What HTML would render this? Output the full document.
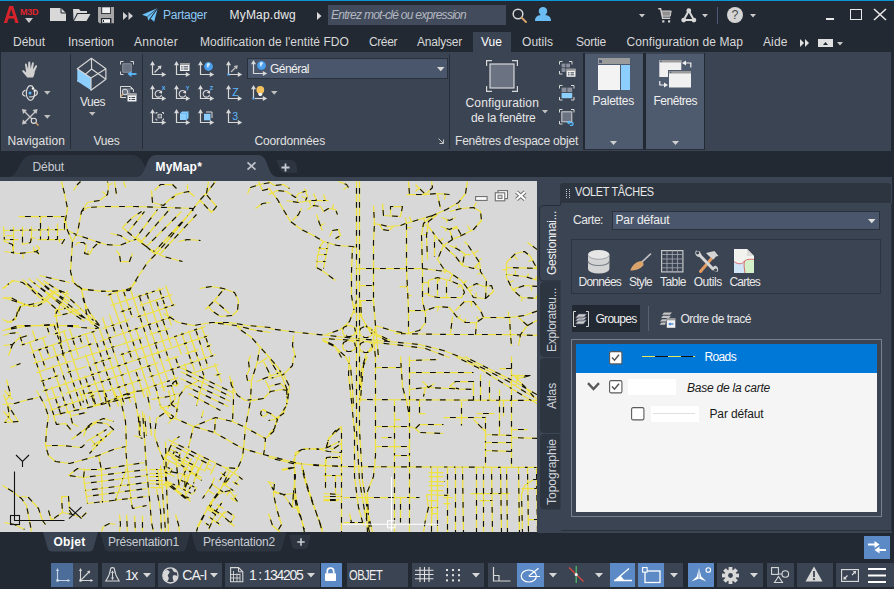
<!DOCTYPE html>
<html><head><meta charset="utf-8"><title>MyMap.dwg</title>
<style>
*{box-sizing:border-box;margin:0;padding:0}
html,body{width:894px;height:589px;overflow:hidden;background:#222933}
body{position:relative;font-family:"Liberation Sans",sans-serif;font-size:12px;color:#e4e4e4}
.a{position:absolute;white-space:nowrap}
.t{position:absolute;white-space:nowrap;line-height:16px;height:16px;font-size:12px}
.c{transform:translateX(-50%)}
svg{position:absolute;overflow:visible}
</style></head><body>

<div class="a" style="left:0px;top:0px;width:894px;height:1px;background:#0c96d8;"></div>
<div class="a" style="left:1px;top:52px;width:890px;height:99px;background:#3b4453;"></div>
<div class="a" style="left:473px;top:32px;width:38px;height:21px;background:#3b4453;"></div>
<div class="a" style="left:70px;top:54px;width:1px;height:95px;background:#262d38;"></div>
<div class="a" style="left:142px;top:54px;width:1px;height:95px;background:#262d38;"></div>
<div class="a" style="left:449px;top:54px;width:1px;height:95px;background:#262d38;"></div>
<div class="a" style="left:583px;top:53px;width:2px;height:97px;background:#222933;"></div>
<div class="a" style="left:585px;top:54px;width:58px;height:95px;background:#4e5a6e;"></div>
<div class="a" style="left:643px;top:53px;width:3px;height:97px;background:#222933;"></div>
<div class="a" style="left:646px;top:54px;width:58px;height:95px;background:#4e5a6e;"></div>
<div class="a" style="left:704px;top:53px;width:1px;height:97px;background:#222933;"></div>
<div class="a" style="left:583px;top:149px;width:122px;height:1px;background:#262d38;"></div>
<div class="a" style="left:0px;top:177px;width:891.5px;height:4px;background:#3b4453;"></div>
<div class="a" style="left:0px;top:181px;width:537px;height:351px;background:#d8d8d8;"></div>
<div class="a" style="left:537px;top:181px;width:355px;height:352px;background:#3b4453;"></div>
<div class="a" style="left:560px;top:183px;width:331px;height:20.3px;background:#2d3541;border-radius:3px 3px 0 0"></div>
<div class="a" style="left:3px;top:4px;font-size:23px;line-height:23px;font-weight:bold;color:#d8232a;transform:scaleX(0.95);transform-origin:0 0">A</div>
<div class="a" style="left:20px;top:7.5px;font-size:9px;line-height:9px;font-weight:bold;color:#e0242b;letter-spacing:-0.3px">M3D</div>
<svg style="left:25.0px;top:18.0px" width="8" height="5"><polygon points="0,0 8,0 4.0,5" fill="#c8c8c8"/></svg>
<svg style="left:50px;top:8px" width="16" height="13"><path d="M0,0 H11 L16,5 V13 H0 Z" fill="#d8d8d8"/><path d="M11,0 V5 H16" fill="none" stroke="#222933" stroke-width="1"/></svg>
<svg style="left:73px;top:9px" width="18" height="12"><path d="M0,0 H6 L7.5,2 H14 V4 H4 L0.5,11 Z" fill="#d8d8d8"/><path d="M4.8,5 H17.5 L13.5,12 H1 Z" fill="#d8d8d8"/></svg>
<svg style="left:98px;top:6.7px" width="16" height="16.3"><path d="M0,0 H16 V16.3 H1.5 L0,14.8 Z" fill="#a6a6a6"/><rect x="3.2" y="0" width="9.6" height="7" fill="#222933"/><rect x="4.2" y="0.3" width="7.8" height="5.8" fill="#f0f0f0"/><rect x="3" y="11" width="10.4" height="5.3" fill="#222933"/><rect x="4.2" y="12.2" width="7.8" height="3.6" fill="#f4f4f4"/><rect x="5" y="13" width="1" height="2" fill="#222933"/></svg>
<svg style="left:122.5px;top:11.5px" width="10" height="8"><polygon points="0,0 4.5,4 0,8" fill="#d0d0d0"/><polygon points="5.5,0 10,4 5.5,8" fill="#d0d0d0"/></svg>
<svg style="left:142.4px;top:8px" width="16" height="14"><path d="M0,6.7 L15.8,0 L12.2,13.8 L8.3,10.6 L6.3,13 L5.4,8.8 Z" fill="#6cc0f8"/><path d="M5.4,8.8 L15.8,0 L8.3,10.6 M6.3,13 L15.8,0" fill="none" stroke="#222933" stroke-width="0.7"/></svg>
<div class="t" style="left:163px;top:7px;font-size:12px;color:#8ec8f4;letter-spacing:-0.253px;">Partager</div>
<div class="t" style="left:229.5px;top:7px;font-size:12px;color:#e8e8e8;letter-spacing:0.201px;">MyMap.dwg</div>
<svg style="left:316.5px;top:11.5px" width="5" height="8"><polygon points="0,0 4.5,4 0,8" fill="#d8d8d8"/></svg>
<div class="a" style="left:328px;top:5px;width:178px;height:20px;background:#424b5b;"></div>
<div class="t" style="left:331px;top:7px;font-size:12px;font-style:italic;color:#b4b8c0;letter-spacing:-0.729px;">Entrez mot-clé ou expression</div>
<svg style="left:512px;top:7.5px" width="15" height="15"><circle cx="6" cy="6" r="4.8" fill="none" stroke="#d8d8d8" stroke-width="1.5"/><path d="M9.6,9.6 L14,14" stroke="#d8a26a" stroke-width="2" stroke-linecap="round"/></svg>
<svg style="left:534.5px;top:7px" width="16" height="14"><circle cx="8" cy="4.2" r="4.2" fill="#6cbcf4"/><path d="M0,14 C0,9 3,8 8,8 C13,8 16,9 16,14 Z" fill="#6cbcf4"/></svg>
<svg style="left:639.0px;top:13.75px" width="6" height="3.5"><polygon points="0,0 6,0 3.0,3.5" fill="#c8c8c8"/></svg>
<svg style="left:658px;top:7.8px" width="14" height="14.5"><path d="M0.3,0.8 H2.6 L4.6,10.2 H12.2" fill="none" stroke="#d0d0d0" stroke-width="1.4"/><path d="M3.4,3 H13.2 L12.2,8.2 H4.5 Z" fill="#909090" stroke="#d0d0d0" stroke-width="1"/><rect x="4.2" y="12.3" width="2.2" height="2.2" fill="#d0d0d0"/><rect x="10" y="12.3" width="2.2" height="2.2" fill="#d0d0d0"/></svg>
<svg style="left:680.5px;top:7.5px" width="16" height="15"><path d="M7.8,2.8 L2.7,12 H12.9 Z" fill="none" stroke="#d8d8d8" stroke-width="2" stroke-linejoin="round"/><circle cx="7.8" cy="2.7" r="2.4" fill="#d8d8d8"/><circle cx="2.7" cy="12.1" r="2.4" fill="#d8d8d8"/><circle cx="12.9" cy="12.1" r="2.4" fill="#d8d8d8"/></svg>
<svg style="left:702.0px;top:13.75px" width="6" height="3.5"><polygon points="0,0 6,0 3.0,3.5" fill="#c8c8c8"/></svg>
<div class="a" style="left:717px;top:6.5px;width:1px;height:17px;background:#4a5a78;"></div>
<div class="a" style="left:727px;top:7px;width:16px;height:16px;border-radius:8px;background:#d4d4d4;color:#4a4a4a;font-size:12.5px;line-height:16.5px;text-align:center">?</div>
<svg style="left:749.5px;top:13.75px" width="6" height="3.5"><polygon points="0,0 6,0 3.0,3.5" fill="#c8c8c8"/></svg>
<div class="a" style="left:826px;top:18px;width:8px;height:2px;background:#e8e8e8;"></div>
<div class="a" style="left:849.5px;top:9px;width:12px;height:11px;border:1.5px solid #e8e8e8"></div>
<svg style="left:874px;top:9px" width="12" height="11"><path d="M0,0 L12,11 M12,0 L0,11" stroke="#e8e8e8" stroke-width="1.6"/></svg>
<div class="t" style="left:13px;top:33.5px;font-size:12px;color:#d8d8d8;letter-spacing:-0.004px;">Début</div>
<div class="t" style="left:68px;top:33.5px;font-size:12px;color:#d8d8d8;letter-spacing:-0.003px;">Insertion</div>
<div class="t" style="left:134px;top:33.5px;font-size:12px;color:#d8d8d8;letter-spacing:0.281px;">Annoter</div>
<div class="t" style="left:200px;top:33.5px;font-size:12px;color:#d8d8d8;letter-spacing:0.071px;">Modification de l'entité FDO</div>
<div class="t" style="left:369px;top:33.5px;font-size:12px;color:#d8d8d8;letter-spacing:-0.401px;">Créer</div>
<div class="t" style="left:417px;top:33.5px;font-size:12px;color:#d8d8d8;letter-spacing:-0.211px;">Analyser</div>
<div class="t" style="left:481px;top:33.5px;font-size:12px;color:#ffffff;letter-spacing:0.031px;">Vue</div>
<div class="t" style="left:522px;top:33.5px;font-size:12px;color:#d8d8d8;letter-spacing:0.054px;">Outils</div>
<div class="t" style="left:576px;top:33.5px;font-size:12px;color:#d8d8d8;letter-spacing:-0.225px;">Sortie</div>
<div class="t" style="left:626.5px;top:33.5px;font-size:12px;color:#d8d8d8;letter-spacing:0.088px;">Configuration de Map</div>
<div class="t" style="left:763px;top:33.5px;font-size:12px;color:#d8d8d8;letter-spacing:0.121px;">Aide</div>
<svg style="left:800px;top:38.5px" width="9" height="8"><polygon points="0,0 4,4 0,8" fill="#e0e0e0"/><polygon points="5,0 9,4 5,8" fill="#e0e0e0"/></svg>
<div class="a" style="left:818px;top:39px;width:15px;height:8px;background:#e0e0e0;"></div>
<svg style="left:823px;top:41.5px" width="5" height="3"><polygon points="0,3 5,3 2.5,0" fill="#222933"/></svg>
<svg style="left:836.5px;top:41.75px" width="6" height="3.5"><polygon points="0,0 6,0 3.0,3.5" fill="#c8c8c8"/></svg>
<div class="t" style="left:7.5px;top:133px;font-size:12px;color:#e0e0e0;letter-spacing:0.080px;">Navigation</div>
<div class="t" style="left:93.5px;top:133px;font-size:12px;color:#e0e0e0;letter-spacing:-0.227px;">Vues</div>
<div class="t" style="left:254.5px;top:133px;font-size:12px;color:#e0e0e0;letter-spacing:-0.141px;">Coordonnées</div>
<div class="t" style="left:455px;top:133px;font-size:12px;color:#e0e0e0;letter-spacing:-0.204px;">Fenêtres d'espace objet</div>
<svg style="left:438px;top:138px" width="6" height="6"><path d="M0.5,0.5 L5,5 M5.5,1.5 V5.5 H1.5" fill="none" stroke="#c8c8c8" stroke-width="1"/></svg>
<svg style="left:21.5px;top:60.5px" width="17" height="17"><path d="M5.2,16.5 C3.5,14 1.5,12 0.3,10.5 C-0.2,9.6 1,8.8 2,9.5 L4.2,11.5 L3,3.6 C2.9,2.4 4.5,2.2 4.8,3.4 L6,8 L6.3,1.5 C6.4,0.2 8.2,0.2 8.3,1.5 L8.6,7.8 L10,2 C10.3,0.8 12,1.1 11.8,2.4 L11,8.5 L13.5,4.6 C14.2,3.6 15.6,4.4 15,5.5 L12.8,10.5 C12.6,13 12,15 11,16.5 Z" fill="#d0d0d0"/></svg>
<svg style="left:21.5px;top:84.5px" width="16" height="16"><ellipse cx="8.5" cy="8" rx="4.2" ry="7.3" fill="none" stroke="#d8d8d8" stroke-width="1.2"/><path d="M3.5,5 C-0.5,7 -0.5,10 3.5,11.2 M13,4.8 C16.5,6.5 16.5,10 11,11.6 L7,12" fill="none" stroke="#d8d8d8" stroke-width="1.2"/><circle cx="8" cy="8" r="1.5" fill="#5bb8ff"/><circle cx="10.8" cy="3.6" r="1.1" fill="#fff"/><circle cx="12.6" cy="6" r="1" fill="#fff"/></svg>
<svg style="left:44.45px;top:91.1px" width="6.5" height="3.8"><polygon points="0,0 6.5,0 3.25,3.8" fill="#c0c0c0"/></svg>
<svg style="left:21.5px;top:108.5px" width="17" height="17"><path d="M2,2 L12,12 M14,2 L2,14" stroke="#c8c8c8" stroke-width="1.4" fill="none"/><polygon points="0,0 5,1 1,5" fill="#c8c8c8"/><polygon points="15.5,0 14.5,5 10.5,1" fill="#c8c8c8"/><polygon points="0,15.5 1,10.5 5,14.5" fill="#c8c8c8"/><circle cx="11.8" cy="11.8" r="2.6" fill="#3b4453" stroke="#e0e0e0" stroke-width="1.1"/><path d="M13.8,13.8 L16.5,16.5" stroke="#d8a870" stroke-width="1.3"/></svg>
<svg style="left:44.45px;top:115.39999999999999px" width="6.5" height="3.8"><polygon points="0,0 6.5,0 3.25,3.8" fill="#c0c0c0"/></svg>
<svg style="left:77px;top:57.5px" width="30" height="33"><path d="M14.4,0.3 L14.6,11 L0.3,23.2 M14.6,11 L28.9,21.2" fill="none" stroke="#d4d4d4" stroke-width="1.2"/><polygon points="0.3,10.8 14,20 14,32.3 0.3,23.2" fill="#8ccfff"/><path d="M14.4,0.3 L0.3,10.8 L14,20 L28.9,10.8 Z M14,20 V32.3 L28.9,21.2 V10.8" fill="none" stroke="#d4d4d4" stroke-width="1.2" stroke-linejoin="round"/></svg>
<div class="t" style="left:80px;top:93.5px;font-size:12px;color:#e8e8e8;letter-spacing:-0.477px;">Vues</div>
<svg style="left:89.25px;top:111.89999999999999px" width="6.5" height="3.8"><polygon points="0,0 6.5,0 3.25,3.8" fill="#c0c0c0"/></svg>
<svg style="left:120px;top:61px" width="17" height="16"><path d="M0.5,3.5 V0.5 H3.5 M10.5,0.5 H13.5 V3.5 M0.5,10.5 V13.5 H3.5" fill="none" stroke="#d8d8d8" stroke-width="1"/><rect x="2.8" y="2.8" width="8.4" height="8.4" fill="#6a7282" stroke="#b0b4bc" stroke-width="0.6"/><path d="M16.5,13 H10" stroke="#5bb8ff" stroke-width="1.8"/><polygon points="7.5,13 11.5,10 11.5,16" fill="#5bb8ff"/></svg>
<svg style="left:120px;top:85.5px" width="17" height="16"><path d="M0.5,0.5 H10.5 L13.5,3.5 V6 M0.5,0.5 V11.5 H6" fill="none" stroke="#d8d8d8" stroke-width="1"/><polygon points="10.5,0.5 13.5,3.5 10.5,3.5" fill="#d8d8d8"/><rect x="2.2" y="2.2" width="8" height="7" fill="#6a7282"/><circle cx="5" cy="6" r="2.8" fill="none" stroke="#e0e0e0" stroke-width="1"/><path d="M3,8 L0.8,10.5" stroke="#d8a870" stroke-width="1.2"/><rect x="7.5" y="7.5" width="9" height="8" fill="#f0f0f0"/><rect x="7.5" y="7.5" width="9" height="2" fill="#9a9a9a"/><path d="M9,11.5 H10.5 M11.5,11.5 H15 M9,13.5 H10.5 M11.5,13.5 H15" stroke="#3b4453" stroke-width="1"/></svg>
<svg style="left:150px;top:61px" width="16" height="16"><path d="M2.5,2.5 V13.5 H13" fill="none" stroke="#d8d8d8" stroke-width="1.2"/><polygon points="0,4.3 2.5,0 5,4.3" fill="#d8d8d8"/><polygon points="11.8,11 16.2,13.5 11.8,16" fill="#d8d8d8"/><path d="M4.5,11.5 L9.5,6.5" stroke="#d8d8d8" stroke-width="1.2"/><polygon points="11.5,4.5 10.8,8.6 7.4,5.2" fill="#d8d8d8"/></svg>
<svg style="left:174px;top:61px" width="16" height="16"><path d="M2.5,2.5 V13.5 H13" fill="none" stroke="#d8d8d8" stroke-width="1.2"/><polygon points="0,4.3 2.5,0 5,4.3" fill="#d8d8d8"/><polygon points="11.8,11 16.2,13.5 11.8,16" fill="#d8d8d8"/><rect x="6" y="2" width="9.5" height="8" fill="#f0f0f0"/><rect x="6" y="2" width="9.5" height="2" fill="#9a9a9a"/><path d="M7.2,5.8 H8.6 M9.6,5.8 H14 M7.2,8 H8.6 M9.6,8 H14" stroke="#3b4453" stroke-width="1"/></svg>
<svg style="left:198px;top:61px" width="16" height="16"><path d="M2.5,2.5 V13.5 H13" fill="none" stroke="#d8d8d8" stroke-width="1.2"/><polygon points="0,4.3 2.5,0 5,4.3" fill="#d8d8d8"/><polygon points="11.8,11 16.2,13.5 11.8,16" fill="#d8d8d8"/><circle cx="10.5" cy="5.5" r="4.4" fill="#4aa0ee"/><path d="M8.7,3.0 q1.5,-1.5 3,-0.5 q0.8,1.2 -0.5,2 q-1.2,1 -0.8,2.5 q-2,-0.8 -1.7,-4 Z" fill="#cfe9ff"/></svg>
<svg style="left:226px;top:61px" width="16" height="16"><path d="M2.5,2.5 V13.5 H13" fill="none" stroke="#d8d8d8" stroke-width="1.2"/><polygon points="0,4.3 2.5,0 5,4.3" fill="#d8d8d8"/><polygon points="11.8,11 16.2,13.5 11.8,16" fill="#d8d8d8"/><rect x="1.5" y="12.5" width="2" height="2" fill="#5bb8ff"/><path d="M5,11 L9.5,6.5" stroke="#c0c0c0" stroke-width="1.2"/><polygon points="11.8,4.2 11,8.4 7.6,5" fill="#c0c0c0"/></svg>
<svg style="left:150px;top:85px" width="16" height="16"><path d="M2.5,2.5 V13.5 H13" fill="none" stroke="#d8d8d8" stroke-width="1.2"/><polygon points="0,4.3 2.5,0 5,4.3" fill="#d8d8d8"/><polygon points="11.8,11 16.2,13.5 11.8,16" fill="#d8d8d8"/><path d="M11.3,7.2 A3.3,3.3 0 1 0 11.6,9.8" fill="none" stroke="#d8d8d8" stroke-width="1.1"/><polygon points="8.6,7.6 12.2,5.2 12,8.8" fill="#d8d8d8"/><text x="11.8" y="4.8" font-size="5.6" font-weight="bold" fill="#5bb8ff" font-family="Liberation Sans,sans-serif">X</text></svg>
<svg style="left:174px;top:85px" width="16" height="16"><path d="M2.5,2.5 V13.5 H13" fill="none" stroke="#d8d8d8" stroke-width="1.2"/><polygon points="0,4.3 2.5,0 5,4.3" fill="#d8d8d8"/><polygon points="11.8,11 16.2,13.5 11.8,16" fill="#d8d8d8"/><path d="M11.3,7.2 A3.3,3.3 0 1 0 11.6,9.8" fill="none" stroke="#d8d8d8" stroke-width="1.1"/><polygon points="8.6,7.6 12.2,5.2 12,8.8" fill="#d8d8d8"/><text x="11.8" y="4.8" font-size="5.6" font-weight="bold" fill="#5bb8ff" font-family="Liberation Sans,sans-serif">Y</text></svg>
<svg style="left:198px;top:85px" width="16" height="16"><path d="M2.5,2.5 V13.5 H13" fill="none" stroke="#d8d8d8" stroke-width="1.2"/><polygon points="0,4.3 2.5,0 5,4.3" fill="#d8d8d8"/><polygon points="11.8,11 16.2,13.5 11.8,16" fill="#d8d8d8"/><path d="M11.3,7.2 A3.3,3.3 0 1 0 11.6,9.8" fill="none" stroke="#d8d8d8" stroke-width="1.1"/><polygon points="8.6,7.6 12.2,5.2 12,8.8" fill="#d8d8d8"/><text x="11.8" y="4.8" font-size="5.6" font-weight="bold" fill="#5bb8ff" font-family="Liberation Sans,sans-serif">Z</text></svg>
<svg style="left:226px;top:85px" width="16" height="16"><path d="M2.5,2.5 V13.5 H13" fill="none" stroke="#d8d8d8" stroke-width="1.2"/><polygon points="0,4.3 2.5,0 5,4.3" fill="#d8d8d8"/><polygon points="11.8,11 16.2,13.5 11.8,16" fill="#d8d8d8"/><text x="6.2" y="11" font-size="10.5" fill="#5bb8ff" font-family="Liberation Sans,sans-serif">Z</text></svg>
<svg style="left:150px;top:109px" width="16" height="16"><path d="M2.5,2.5 V13.5 H13" fill="none" stroke="#d8d8d8" stroke-width="1.2"/><polygon points="0,4.3 2.5,0 5,4.3" fill="#d8d8d8"/><polygon points="11.8,11 16.2,13.5 11.8,16" fill="#d8d8d8"/><path d="M6,5 V3.5 H7.5 M12,3.5 H13.5 V5 M6,9.5 V11 H7.5 M13.5,9.5 V11 H12" fill="none" stroke="#d8d8d8" stroke-width="1"/><rect x="8" y="5.3" width="3.6" height="3.6" fill="#6a7282" stroke="#d0d0d0" stroke-width="0.8"/></svg>
<svg style="left:174px;top:109px" width="16" height="16"><path d="M2.5,2.5 V13.5 H13" fill="none" stroke="#d8d8d8" stroke-width="1.2"/><polygon points="0,4.3 2.5,0 5,4.3" fill="#d8d8d8"/><polygon points="11.8,11 16.2,13.5 11.8,16" fill="#d8d8d8"/><polygon points="6,4.5 8,2.5 14.5,2.5 14.5,9 12.5,11 6,11" fill="#8ccfff"/><path d="M6,4.5 H12.5 V11 M12.5,4.5 L14.5,2.5" stroke="#5aaef0" stroke-width="0.7" fill="none"/></svg>
<svg style="left:198px;top:109px" width="16" height="16"><path d="M2.5,2.5 V13.5 H13" fill="none" stroke="#d8d8d8" stroke-width="1.2"/><polygon points="0,4.3 2.5,0 5,4.3" fill="#d8d8d8"/><polygon points="11.8,11 16.2,13.5 11.8,16" fill="#d8d8d8"/><path d="M8,3 H14 V9" fill="none" stroke="#d8d8d8" stroke-width="1"/><rect x="6" y="4.8" width="6.5" height="6.5" fill="#8ccfff"/></svg>
<svg style="left:226px;top:109px" width="16" height="16"><path d="M2.5,2.5 V13.5 H13" fill="none" stroke="#d8d8d8" stroke-width="1.2"/><polygon points="0,4.3 2.5,0 5,4.3" fill="#d8d8d8"/><polygon points="11.8,11 16.2,13.5 11.8,16" fill="#d8d8d8"/><text x="6.2" y="11" font-size="10.5" fill="#5bb8ff" font-family="Liberation Sans,sans-serif">3</text></svg>
<svg style="left:251px;top:85px" width="16" height="16"><path d="M2.5,2.5 V13.5" fill="none" stroke="#d8d8d8" stroke-width="1.2"/><polygon points="0,4.3 2.5,0 5,4.3" fill="#d8d8d8"/><rect x="1.5" y="12.5" width="2" height="2" fill="#5bb8ff"/><path d="M4,13.5 H13" stroke="#d8d8d8" stroke-width="1.2"/><polygon points="11.8,11 16.2,13.5 11.8,16" fill="#d8d8d8"/><circle cx="9.3" cy="4.8" r="3.9" fill="#f4c25c"/><path d="M7.3,8 H11.3 V9.6 L10.3,11 H8.3 L7.3,9.6 Z" fill="#f0f0f0"/></svg>
<svg style="left:271.05px;top:91.39999999999999px" width="6.5" height="3.8"><polygon points="0,0 6.5,0 3.25,3.8" fill="#c0c0c0"/></svg>
<div class="a" style="left:247px;top:58px;width:200.5px;height:21px;background:#4a566b;border:1px solid #2a313d"></div>
<svg style="left:251px;top:60px" width="16" height="16"><path d="M2.5,2.5 V13.5 H13" fill="none" stroke="#d8d8d8" stroke-width="1.2"/><polygon points="0,4.3 2.5,0 5,4.3" fill="#d8d8d8"/><polygon points="11.8,11 16.2,13.5 11.8,16" fill="#d8d8d8"/><circle cx="10.5" cy="5.5" r="4.4" fill="#4aa0ee"/><path d="M8.7,3.0 q1.5,-1.5 3,-0.5 q0.8,1.2 -0.5,2 q-1.2,1 -0.8,2.5 q-2,-0.8 -1.7,-4 Z" fill="#cfe9ff"/></svg>
<div class="t" style="left:270px;top:60.5px;font-size:12px;color:#f0f0f0;letter-spacing:-0.527px;">Général</div>
<svg style="left:436.75px;top:66.9px" width="7.5" height="4.2"><polygon points="0,0 7.5,0 3.75,4.2" fill="#d8d8d8"/></svg>
<svg style="left:485.5px;top:59.5px" width="32" height="32"><path d="M0.6,6 V0.6 H6 M26,0.6 H31.4 V6 M0.6,26 V31.4 H6 M26,31.4 H31.4 V26" fill="none" stroke="#d8d8d8" stroke-width="1.2"/><rect x="4" y="4" width="24" height="24" fill="#6b7383" stroke="#d8d8d8" stroke-width="1.2"/></svg>
<div class="t" style="left:465.5px;top:95px;font-size:12px;color:#e8e8e8;letter-spacing:0.163px;">Configuration</div>
<div class="t" style="left:471px;top:110px;font-size:12px;color:#e8e8e8;letter-spacing:-0.170px;">de la fenêtre</div>
<svg style="left:541.5px;top:109.55px" width="6" height="3.5"><polygon points="0,0 6,0 3.0,3.5" fill="#c0c0c0"/></svg>
<svg style="left:558.5px;top:60.5px" width="17" height="17"><path d="M0.5,3.5 V0.5 H3.5 M10,0.5 H13 V3.5 M0.5,10 V13 H3.5" fill="none" stroke="#d8d8d8" stroke-width="1"/><rect x="2.6" y="2.6" width="3.8" height="3.8" fill="#8a909c"/><rect x="7.2" y="2.6" width="3.8" height="3.8" fill="#8a909c"/><rect x="2.6" y="7.2" width="3.8" height="3.8" fill="#8a909c"/><rect x="7.5" y="7.8" width="9" height="8" fill="#f0f0f0"/><rect x="7.5" y="7.8" width="9" height="2" fill="#9a9a9a"/><path d="M9,11.8 H10.5 M11.5,11.8 H15 M9,13.8 H10.5 M11.5,13.8 H15" stroke="#3b4453" stroke-width="1"/></svg>
<svg style="left:558.5px;top:85px" width="16" height="16"><path d="M0.5,3.5 V0.5 H3.5 M12,0.5 H15 V3.5 M0.5,12 V15 H3.5 M12,15 H15 V12" fill="none" stroke="#d8d8d8" stroke-width="1"/><rect x="2.6" y="2.6" width="4.9" height="4.6" fill="#8a909c"/><rect x="8.3" y="2.6" width="4.9" height="4.6" fill="#8a909c"/><rect x="2.6" y="8" width="10.6" height="5.2" fill="#8ccfff"/></svg>
<svg style="left:558.5px;top:109px" width="17" height="17"><path d="M0.5,3.5 V0.5 H3.5 M12,0.5 H15 V3.5 M0.5,12 V15 H3.5" fill="none" stroke="#d8d8d8" stroke-width="1"/><rect x="2.8" y="2.8" width="10" height="10" fill="#6b7383" stroke="#d0d0d0" stroke-width="1"/><path d="M9,13.5 H13.5 A2.3,2.3 0 0 1 13.5,16.4 H11" fill="none" stroke="#5bb8ff" stroke-width="1.3"/><polygon points="7.5,13.5 10.5,11.2 10.5,15.8" fill="#5bb8ff"/></svg>
<div class="a" style="left:598px;top:58px;width:32px;height:6px;background:#9b9b9b;"></div>
<div class="a" style="left:599.2px;top:59.5px;width:3px;height:3px;background:#4e5a78;"></div>
<div class="a" style="left:598px;top:65px;width:22px;height:25px;background:#f3f3f3;"></div>
<div class="a" style="left:621px;top:65px;width:9px;height:25px;background:#8ccfff;"></div>
<div class="t" style="left:592.5px;top:93px;font-size:12px;color:#f0f0f0;letter-spacing:-0.232px;">Palettes</div>
<svg style="left:610.2px;top:140.7px" width="7" height="4"><polygon points="0,0 7,0 3.5,4" fill="#d0d0d0"/></svg>
<svg style="left:658.5px;top:60px" width="33" height="28"><rect x="0.3" y="0" width="22" height="17" fill="#f0f0f0"/><rect x="0.3" y="0" width="22" height="2.5" fill="#9b9b9b"/><rect x="1.3" y="0.7" width="1.3" height="1.3" fill="#4e5a78"/><rect x="9.5" y="10.5" width="23" height="17.5" fill="#f0f0f0" stroke="#4e5a6e" stroke-width="1"/><rect x="10" y="11" width="22" height="2.5" fill="#9b9b9b"/><rect x="11" y="11.7" width="1.3" height="1.3" fill="#4e5a78"/><path d="M26,3 H31.8 V7.5" fill="none" stroke="#f0f0f0" stroke-width="1.2"/><polygon points="23,3 27,0.5 27,5.5" fill="#f0f0f0"/><path d="M0.8,21 V25 H6" fill="none" stroke="#f0f0f0" stroke-width="1.2"/><polygon points="9,25 5,22.5 5,27.5" fill="#f0f0f0"/></svg>
<div class="t" style="left:653.5px;top:93px;font-size:12px;color:#f0f0f0;letter-spacing:-0.482px;">Fenêtres</div>
<svg style="left:671.5px;top:140.7px" width="7" height="4"><polygon points="0,0 7,0 3.5,4" fill="#d0d0d0"/></svg>
<svg style="left:0;top:181px" width="537" height="351" viewBox="0 0 537 351"><defs><clipPath id="mc"><rect x="0" y="0" width="537" height="351"/></clipPath></defs><g clip-path="url(#mc)" fill="none" stroke-linejoin="round"><path d="M61.5,0.5 64.5,12.5 67.5,27.5 65.5,39.5 67.5,49.5 72.5,60.5 71.5,75.5 70.5,90.5 73.5,101.5 81.5,108.5 84.5,120.5 86.5,132.5 90.5,141.5 99.5,147.5M81.5,108.5 108.5,110.5 129.5,109.5 137.5,96.5 147.5,81.5 155.5,73.5 169.5,57.5 181.5,42.5 193.5,27.5 200.5,18.5 208.5,9.5 215.5,0.5M72.5,60.5 77.5,51.5 81.5,30.5 87.5,26.5 105.5,25.5 135.5,25.5 166.5,26.5 193.5,27.5M67.5,49.5 78.5,54.5 90.5,58.5 105.5,63.5 119.5,64.5 129.5,60.5 138.5,57.5 147.5,66.5 155.5,73.5M18.5,35.5 64.5,35.5M3.5,45.5 4.5,60.5 12.5,63.5 13.5,72.5M13.5,45.5 13.5,72.5M22.5,45.5 22.5,63.5M31.5,45.5 31.5,60.5M40.5,35.5 40.5,58.5M48.5,45.5 48.5,58.5M57.5,42.5 57.5,58.5M64.5,35.5 64.5,49.5M3.5,49.5 64.5,48.5M3.5,58.5 18.5,58.5M4.5,70.5 18.5,72.5 36.5,70.5 39.5,73.5M37.5,58.5 64.5,58.5 61.5,63.5M36.5,64.5 39.5,67.5 36.5,70.5M22.5,63.5 30.5,61.5 31.5,55.5M6.5,54.5 12.5,54.5M135.5,57.5 157.5,28.5M141.5,60.5 169.5,28.5M147.5,64.5 181.5,30.5M154.5,70.5 193.5,28.5M160.5,72.5 196.5,33.5M122.5,46.5 135.5,57.5 147.5,66.5 163.5,75.5 182.5,80.5M122.5,46.5 132.5,36.5 141.5,30.5M129.5,49.5 144.5,30.5M110.5,52.5 120.5,54.5 129.5,60.5M178.5,60.5 187.5,58.5 200.5,59.5M199.5,18.5 211.5,31.5 216.5,25.5 205.5,12.5M75.5,64.5 77.5,61.5 83.5,61.5 86.5,64.5 84.5,72.5 89.5,73.5 92.5,67.5 96.5,63.5 101.5,61.5M116.5,69.5 119.5,73.5 120.5,80.5 129.5,80.5 132.5,72.5M73.5,9.5 77.5,3.5 80.5,0.5M87.5,21.5 99.5,19.5 107.5,13.5 108.5,6.5 107.5,0.5M114.5,0.5 116.5,13.5M123.5,0.5 125.5,6.5M87.5,21.5 81.5,30.5M151.5,9.5 152.5,21.5 163.5,24.5 169.5,18.5 178.5,12.5 188.5,10.5 194.5,15.5M154.5,9.5 160.5,3.5 172.5,3.5 176.5,7.5M187.5,3.5 187.5,9.5M208.5,0.5 206.5,12.5M172.5,18.5 175.5,13.5 181.5,12.5M247.5,12.5 250.5,6.5 259.5,3.5 270.5,1.5M255.5,27.5 262.5,22.5 270.5,21.5M258.5,0.5 262.5,9.5 270.5,7.5M199.5,107.5 211.5,105.5 223.5,107.5 234.5,111.5 238.5,119.5 237.5,129.5 232.5,134.5 220.5,135.5 211.5,129.5 208.5,125.5 214.5,119.5 223.5,108.5M214.5,119.5 229.5,132.5M208.5,125.5 205.5,128.5M163.5,132.5 178.5,141.5 193.5,144.5 211.5,141.5 229.5,141.5 247.5,144.5 270.5,146.5M211.5,141.5 235.5,144.5 256.5,149.5 270.5,151.5M3.5,107.5 12.5,99.5 22.5,101.5 30.5,107.5 39.5,116.5 45.5,120.5 36.5,125.5 24.5,123.5 18.5,126.5 15.5,138.5 6.5,141.5M3.5,116.5 12.5,119.5 24.5,123.5M22.5,98.5 54.5,126.5 60.5,132.5M28.5,97.5 64.5,126.5 84.5,140.5M36.5,97.5 48.5,108.5 69.5,120.5M39.5,94.5 60.5,99.5 69.5,101.5M45.5,101.5 57.5,108.5 69.5,113.5M45.5,120.5 55.5,110.5 61.5,111.5M55.5,129.5 57.5,144.5 60.5,157.5 63.5,176.5M55.5,129.5 69.5,126.5M3.5,149.5 18.5,144.5 39.5,144.5 55.5,144.5 78.5,144.5M3.5,164.5 12.5,163.5 18.5,157.5 27.5,154.5M3.5,154.5 9.5,152.5 18.5,151.5M268.5,6.5 277.5,18.5 284.5,30.5 290.5,40.5 301.5,48.5 313.5,54.5 323.5,60.5 337.5,64.5 352.5,65.5 356.5,66.5M323.5,60.5 320.5,64.5 317.5,75.5 316.5,86.5 323.5,90.5 331.5,96.5 335.5,99.5M307.5,28.5 313.5,24.5 320.5,25.5 323.5,30.5 328.5,27.5 335.5,28.5 337.5,33.5M316.5,33.5 319.5,42.5 322.5,49.5M329.5,55.5 332.5,49.5 338.5,48.5 340.5,54.5 335.5,57.5M328.5,61.5 323.5,87.5M317.5,67.5 327.5,67.5M317.5,73.5 326.5,73.5M316.5,80.5 325.5,80.5M373.5,24.5 374.5,42.5 373.5,60.5 373.5,87.5 373.5,120.5 375.5,144.5 378.5,176.5M382.5,22.5 383.5,34.5 400.5,35.5 402.5,25.5 390.5,25.5 390.5,33.5M373.5,42.5 379.5,43.5 388.5,45.5 400.5,44.5 405.5,42.5M379.5,43.5 382.5,48.5 388.5,49.5 393.5,45.5M405.5,36.5 406.5,42.5 406.5,87.5 408.5,129.5 408.5,151.5M356.5,87.5 373.5,87.5 406.5,87.5 422.5,87.5 437.5,89.5 449.5,90.5M359.5,104.5 373.5,104.5M359.5,119.5 373.5,119.5M399.5,105.5 406.5,105.5M467.5,0.5 465.5,12.5 458.5,21.5 446.5,28.5 432.5,34.5 423.5,42.5 421.5,54.5 422.5,87.5 422.5,120.5 425.5,132.5 425.5,141.5 419.5,149.5 406.5,152.5 391.5,149.5 375.5,144.5M437.5,33.5 428.5,40.5 426.5,54.5 427.5,78.5M400.5,44.5 412.5,40.5 432.5,34.5M408.5,129.5 425.5,129.5 437.5,125.5 449.5,126.5 456.5,135.5 465.5,141.5 476.5,141.5 483.5,136.5 509.5,136.5 524.5,134.5 538.5,129.5M452.5,135.5 450.5,152.5M476.5,141.5 475.5,153.5M509.5,136.5 510.5,153.5 511.5,164.5M394.5,152.5 449.5,153.5 509.5,153.5 538.5,154.5M449.5,30.5 461.5,27.5 473.5,26.5 480.5,30.5 481.5,39.5 473.5,48.5 461.5,54.5 452.5,58.5 443.5,64.5 455.5,75.5 462.5,84.5 464.5,72.5 456.5,67.5 449.5,64.5M428.5,45.5 437.5,57.5 443.5,64.5 437.5,78.5 443.5,87.5 452.5,93.5 461.5,99.5 467.5,107.5 473.5,116.5 485.5,117.5 493.5,110.5 491.5,104.5 483.5,105.5M479.5,81.5 480.5,90.5 486.5,99.5 485.5,117.5M428.5,99.5 437.5,96.5 449.5,99.5 461.5,104.5 464.5,111.5 461.5,116.5 437.5,116.5 428.5,114.5 428.5,99.5M437.5,96.5 437.5,116.5M446.5,99.5 446.5,116.5M455.5,129.5 464.5,120.5 473.5,120.5 480.5,129.5 483.5,136.5M434.5,54.5 434.5,75.5M441.5,36.5 449.5,39.5 455.5,36.5M440.5,45.5 449.5,48.5 456.5,45.5 461.5,54.5M449.5,48.5 452.5,58.5M462.5,84.5 473.5,87.5 479.5,81.5 473.5,72.5 467.5,63.5 464.5,60.5M452.5,93.5 449.5,99.5M467.5,107.5 476.5,102.5 483.5,105.5M506.5,81.5 515.5,72.5 524.5,70.5 530.5,75.5 538.5,90.5M506.5,81.5 506.5,96.5 512.5,108.5 521.5,116.5 538.5,117.5M506.5,86.5 538.5,87.5M506.5,93.5 524.5,95.5 538.5,99.5M512.5,108.5 524.5,104.5 538.5,105.5M527.5,61.5 538.5,69.5M518.5,136.5 527.5,144.5 520.5,153.5 518.5,164.5M538.5,138.5 527.5,144.5M406.5,13.5 425.5,13.5 437.5,12.5 449.5,13.5M408.5,0.5 409.5,13.5M415.5,3.5 425.5,13.5 432.5,6.5 431.5,0.5M437.5,13.5 440.5,27.5M338.5,0.5 346.5,3.5 348.5,6.5M268.5,13.5 277.5,9.5 286.5,10.5 295.5,16.5 298.5,12.5 307.5,9.5M286.5,19.5 298.5,21.5 310.5,19.5 328.5,19.5M292.5,39.5 298.5,33.5 301.5,27.5M268.5,0.5 274.5,4.5 283.5,3.5 289.5,7.5M304.5,7.5 307.5,15.5 305.5,19.5M313.5,12.5 316.5,19.5M323.5,13.5 325.5,19.5M268.5,147.5 298.5,151.5 328.5,154.5 356.5,157.5 388.5,160.5 419.5,163.5 443.5,169.5 461.5,176.5M322.5,157.5 356.5,159.5 394.5,163.5 425.5,167.5 449.5,176.5M375.5,144.5 373.5,157.5 375.5,176.5M293.5,154.5 292.5,164.5 295.5,176.5M322.5,158.5 334.5,164.5 341.5,176.5M359.5,132.5 370.5,151.5 388.5,160.5M352.5,65.5 351.5,90.5 351.5,114.5 354.5,132.5M356.5,0.5 356.5,175.5 356.5,249.5 359.5,299.5 364.5,329.5 369.5,351.5M359.5,0.5 359.5,175.5 359.5,249.5 362.5,299.5 367.5,329.5 372.5,351.5M355.5,150.5 354.5,153.5 350.5,155.5 347.5,155.5 343.5,153.5 342.5,150.5 343.5,146.5 347.5,144.5 350.5,144.5 354.5,146.5 355.5,150.5M372.5,151.5 371.5,154.5 367.5,156.5 364.5,156.5 360.5,154.5 359.5,151.5 360.5,147.5 364.5,145.5 367.5,145.5 371.5,147.5 372.5,151.5M355.5,165.5 354.5,168.5 350.5,170.5 347.5,170.5 343.5,168.5 342.5,165.5 343.5,161.5 347.5,159.5 350.5,159.5 354.5,161.5 355.5,165.5M372.5,166.5 371.5,169.5 367.5,171.5 364.5,171.5 360.5,169.5 359.5,166.5 360.5,162.5 364.5,160.5 367.5,160.5 371.5,162.5 372.5,166.5M322.5,159.5 334.5,165.5 345.5,175.5 350.5,185.5 352.5,206.5 353.5,225.5M377.5,159.5 366.5,172.5 361.5,188.5 360.5,206.5M326.5,153.5 340.5,148.5 349.5,140.5 354.5,127.5 356.5,119.5M360.5,119.5 361.5,135.5 366.5,145.5 377.5,153.5 390.5,159.5M236.5,144.5 241.5,149.5 250.5,155.5 259.5,165.5 269.5,176.5 279.5,188.5 283.5,199.5M259.5,167.5 257.5,180.5 251.5,199.5M258.5,182.5 267.5,176.5M256.5,200.5 282.5,190.5M263.5,180.5 271.5,196.5M269.5,178.5 279.5,194.5M250.5,174.5 248.5,180.5 249.5,188.5 246.5,194.5 247.5,199.5 250.5,199.5M229.5,194.5 231.5,204.5 237.5,214.5 245.5,219.5 251.5,218.5M180.5,190.5 230.5,215.5M180.5,197.5 230.5,220.5M184.5,204.5 228.5,225.5M188.5,212.5 220.5,229.5M180.5,186.5 232.5,211.5M204.5,194.5 196.5,224.5M349.5,175.5 348.5,193.5 351.5,220.5 354.5,250.5 354.5,295.5 358.5,326.5 363.5,344.5M367.5,175.5 363.5,184.5 361.5,205.5 360.5,220.5M375.5,175.5 375.5,220.5 375.5,274.5 373.5,295.5 367.5,310.5 366.5,332.5 367.5,351.5M394.5,218.5 394.5,351.5M400.5,175.5 402.5,205.5 406.5,220.5 409.5,235.5M409.5,175.5 409.5,351.5M360.5,218.5 538.5,219.5M268.5,276.5 292.5,282.5 343.5,285.5 538.5,286.5M375.5,186.5 400.5,186.5M409.5,191.5 473.5,191.5M375.5,245.5 409.5,245.5M381.5,256.5 391.5,256.5M375.5,265.5 409.5,265.5M394.5,274.5 409.5,274.5M343.5,316.5 419.5,316.5M343.5,341.5 364.5,341.5M409.5,179.5 437.5,178.5M409.5,208.5 425.5,206.5 473.5,208.5M449.5,205.5 455.5,200.5 473.5,200.5 473.5,219.5M449.5,205.5 461.5,208.5M419.5,219.5 419.5,232.5 425.5,232.5M422.5,200.5 428.5,206.5 434.5,202.5M425.5,206.5 423.5,215.5M511.5,175.5 511.5,285.5M485.5,235.5 485.5,285.5M461.5,220.5 461.5,244.5M443.5,236.5 485.5,236.5M473.5,238.5 485.5,250.5M476.5,232.5 494.5,232.5M480.5,193.5 480.5,219.5M489.5,199.5 489.5,219.5M499.5,208.5 499.5,253.5M503.5,219.5 503.5,235.5M485.5,253.5 511.5,254.5M485.5,261.5 511.5,261.5M485.5,269.5 511.5,270.5M511.5,248.5 527.5,248.5M511.5,256.5 538.5,257.5M499.5,187.5 511.5,187.5M511.5,194.5 530.5,194.5M518.5,193.5 515.5,205.5M409.5,245.5 415.5,247.5 419.5,243.5 443.5,243.5M415.5,247.5 419.5,251.5 443.5,252.5M394.5,238.5 400.5,238.5M431.5,286.5 431.5,351.5M437.5,286.5 437.5,351.5M447.5,286.5 447.5,351.5M455.5,286.5 455.5,351.5M462.5,286.5 463.5,351.5M476.5,286.5 476.5,351.5M483.5,286.5 483.5,351.5M491.5,286.5 492.5,351.5M500.5,286.5 501.5,351.5M506.5,286.5 507.5,351.5M518.5,286.5 519.5,351.5M527.5,286.5 528.5,351.5M536.5,286.5 537.5,351.5M428.5,291.5 443.5,291.5M428.5,295.5 443.5,295.5M428.5,300.5 444.5,300.5M428.5,304.5 443.5,304.5M428.5,309.5 443.5,309.5M426.5,313.5 449.5,314.5M428.5,319.5 437.5,319.5M428.5,326.5 437.5,326.5M431.5,332.5 437.5,332.5M443.5,316.5 452.5,316.5M443.5,322.5 450.5,322.5M470.5,312.5 509.5,312.5M479.5,319.5 491.5,319.5M521.5,307.5 536.5,307.5M521.5,313.5 524.5,304.5 533.5,298.5 538.5,298.5M521.5,313.5 522.5,351.5M527.5,338.5 538.5,338.5M426.5,313.5 428.5,326.5 425.5,338.5 423.5,351.5M432.5,326.5 431.5,338.5M455.5,175.5 479.5,187.5 503.5,202.5 524.5,215.5 538.5,223.5M459.5,175.5 483.5,187.5 508.5,200.5 527.5,212.5 538.5,218.5M464.5,175.5 488.5,187.5 512.5,199.5 538.5,214.5M515.5,196.5 524.5,205.5 533.5,215.5M512.5,193.5 518.5,197.5 530.5,194.5M293.5,175.5 292.5,184.5 283.5,193.5 274.5,196.5 268.5,197.5M268.5,205.5 280.5,202.5 286.5,208.5 287.5,220.5 283.5,232.5 274.5,238.5 268.5,239.5M283.5,193.5 289.5,205.5 287.5,220.5M268.5,253.5 274.5,247.5 277.5,235.5M341.5,245.5 334.5,250.5 328.5,258.5 326.5,265.5 332.5,268.5 341.5,262.5M295.5,274.5 301.5,268.5 316.5,267.5 328.5,270.5 341.5,271.5M293.5,277.5 295.5,295.5 293.5,310.5 296.5,326.5 301.5,338.5 304.5,351.5M301.5,285.5 305.5,301.5 310.5,316.5 316.5,332.5 320.5,344.5 322.5,351.5M268.5,300.5 274.5,310.5 283.5,313.5 292.5,326.5 293.5,310.5M325.5,277.5 325.5,304.5M325.5,294.5 341.5,294.5M341.5,245.5 341.5,351.5M325.5,276.5 341.5,276.5M323.5,315.5 341.5,315.5M323.5,319.5 338.5,319.5M281.5,288.5 292.5,286.5M268.5,332.5 272.5,344.5 280.5,351.5M349.5,332.5 351.5,341.5 358.5,341.5M400.5,316.5 400.5,341.5M409.5,316.5 419.5,316.5M367.5,316.5 369.5,351.5M36.5,209.5 44.5,223.5 48.5,235.5 46.5,249.5 45.5,264.5 48.5,274.5 55.5,280.5 69.5,282.5 84.5,278.5 98.5,274.5 113.5,268.5 125.5,265.5M2.5,223.5 14.5,222.5 28.5,218.5 38.5,216.5M3.5,213.5 7.5,223.5 9.5,235.5 4.5,241.5M7.5,223.5 18.5,240.5 4.5,241.5M3.5,230.5 12.5,240.5M45.5,264.5 62.5,264.5 81.5,266.5 84.5,263.5M53.5,234.5 69.5,230.5 84.5,227.5 101.5,223.5 120.5,218.5 134.5,215.5M53.5,234.5 56.5,243.5 65.5,242.5 71.5,249.5M69.5,230.5 72.5,242.5 78.5,245.5M72.5,234.5 86.5,231.5M71.5,258.5 79.5,252.5 91.5,242.5 103.5,237.5 113.5,240.5M83.5,255.5 86.5,247.5 96.5,241.5 106.5,242.5 113.5,248.5 101.5,259.5 89.5,272.5M86.5,260.5 106.5,248.5M91.5,265.5 110.5,252.5M90.5,257.5 96.5,265.5M97.5,252.5 103.5,260.5M98.5,274.5 101.5,288.5M84.5,288.5 101.5,288.5 125.5,284.5 144.5,281.5M68.5,294.5 77.5,287.5 84.5,288.5 83.5,296.5 68.5,294.5M83.5,296.5 87.5,322.5M83.5,296.5 146.5,288.5M84.5,302.5 146.5,294.5M85.5,309.5 146.5,301.5M86.5,315.5 146.5,307.5M87.5,322.5 146.5,315.5M101.5,288.5 102.5,321.5M126.5,287.5 115.5,319.5M125.5,265.5 127.5,288.5 131.5,322.5 132.5,327.5 146.5,324.5M142.5,230.5 144.5,257.5 146.5,288.5 149.5,317.5 151.5,341.5 153.5,350.5M134.5,254.5 142.5,257.5M120.5,218.5 125.5,240.5 126.5,265.5M134.5,215.5 138.5,237.5 139.5,254.5M154.5,254.5 159.5,269.5 163.5,278.5 168.5,269.5 173.5,259.5 179.5,255.5M154.5,254.5 156.5,237.5 166.5,230.5 173.5,235.5 168.5,242.5M149.5,288.5 163.5,288.5M149.5,292.5 163.5,292.5M149.5,295.5 163.5,295.5M149.5,299.5 163.5,299.5M149.5,302.5 163.5,303.5M150.5,306.5 163.5,306.5M157.5,288.5 159.5,307.5M163.5,278.5 166.5,305.5 168.5,350.5M156.5,307.5 160.5,329.5 161.5,350.5M2.5,304.5 12.5,310.5 21.5,317.5 26.5,324.5 28.5,334.5 31.5,350.5M21.5,315.5 28.5,316.5 38.5,327.5 42.5,339.5 45.5,343.5M4.5,341.5 14.5,343.5 24.5,348.5M61.5,315.5 68.5,315.5 69.5,329.5 72.5,334.5M61.5,315.5 62.5,331.5 56.5,335.5 51.5,339.5 48.5,329.5M62.5,331.5 72.5,333.5 81.5,336.5 86.5,331.5M119.5,333.5 120.5,343.5 119.5,350.5M126.5,333.5 127.5,350.5M134.5,334.5 135.5,350.5M142.5,334.5 142.5,350.5M101.5,350.5 103.5,345.5 109.5,342.5 115.5,343.5M79.5,209.5 83.5,221.5M91.5,209.5 95.5,223.5M103.5,209.5 106.5,222.5M113.5,209.5 118.5,219.5 120.5,218.5M146.5,209.5 150.5,228.5M156.5,209.5 160.5,225.5 166.5,230.5M168.5,209.5 171.5,223.5 178.5,228.5M134.5,215.5 133.5,209.5M81.5,213.5 96.5,210.5 110.5,209.5M115.5,216.5 134.5,210.5 144.5,209.5M151.5,218.5 168.5,215.5 179.5,212.5M159.5,227.5 179.5,221.5M139.5,233.5 140.5,254.5M144.5,233.5 146.5,254.5M149.5,235.5 151.5,254.5M175.5,237.5 193.5,245.5 214.5,251.5 242.5,267.5 263.5,273.5 294.5,281.5 314.5,284.5 339.5,285.5M167.5,258.5 224.5,286.5 237.5,287.5M232.5,199.5 233.5,219.5 232.5,240.5 245.5,246.5 250.5,219.5 251.5,199.5M245.5,246.5 243.5,267.5 242.5,276.5 237.5,287.5 224.5,302.5 211.5,320.5 198.5,343.5 196.5,350.5M245.5,246.5 265.5,257.5 264.5,268.5 263.5,273.5M265.5,257.5 273.5,250.5 277.5,238.5 270.5,232.5 263.5,229.5M277.5,238.5 286.5,224.5 287.5,209.5 283.5,199.5M251.5,219.5 263.5,217.5 270.5,210.5 281.5,208.5 287.5,209.5M265.5,199.5 270.5,210.5M267.5,232.5 265.5,234.5 263.5,235.5 261.5,234.5 260.5,232.5 261.5,229.5 263.5,228.5 265.5,229.5 267.5,232.5M215.5,236.5 214.5,251.5M193.5,245.5 215.5,236.5 232.5,240.5M193.5,245.5 188.5,266.5M203.5,229.5 201.5,236.5M175.5,237.5 179.5,214.5 185.5,206.5 198.5,199.5M160.5,224.5 170.5,237.5 175.5,237.5M160.5,206.5 171.5,204.5 175.5,217.5 167.5,227.5M178.5,202.5 176.5,204.5 174.5,204.5 172.5,202.5 174.5,200.5 176.5,200.5 178.5,202.5M165.5,260.5 166.5,302.5 185.5,317.5M170.5,263.5 211.5,284.5M169.5,271.5 203.5,289.5M171.5,276.5 201.5,299.5M165.5,289.5 188.5,294.5M165.5,299.5 190.5,320.5M175.5,276.5 179.5,307.5M183.5,278.5 185.5,312.5M193.5,281.5 184.5,309.5M198.5,286.5 193.5,302.5M224.5,286.5 237.5,294.5 242.5,298.5M229.5,290.5 218.5,312.5 208.5,325.5 198.5,345.5M214.5,296.5 211.5,304.5 202.5,317.5M218.5,312.5 229.5,309.5 237.5,320.5M208.5,325.5 221.5,333.5 234.5,345.5M206.5,327.5 215.5,333.5 208.5,348.5M221.5,333.5 227.5,330.5 234.5,335.5 229.5,343.5M175.5,333.5 178.5,343.5 179.5,350.5M160.5,284.5 165.5,350.5M294.5,281.5 295.5,271.5 304.5,267.5 317.5,268.5 327.5,266.5 339.5,260.5M327.5,266.5 328.5,257.5 339.5,247.5M294.5,281.5 294.5,302.5 296.5,320.5 301.5,338.5 304.5,348.5M301.5,282.5 306.5,302.5 312.5,320.5 317.5,335.5 322.5,348.5M282.5,289.5 294.5,286.5M267.5,300.5 274.5,302.5 273.5,312.5 276.5,327.5 281.5,343.5 278.5,348.5M273.5,311.5 283.5,313.5 294.5,312.5M291.5,326.5 299.5,327.5M323.5,294.5 339.5,294.5M325.5,285.5 326.5,276.5 339.5,275.5M325.5,294.5 325.5,307.5M323.5,312.5 339.5,313.5M323.5,318.5 339.5,318.5M335.5,294.5 335.5,312.5M30.5,99.5 52.5,115.5 81.5,135.5 99.5,144.5M38.5,99.5 61.5,117.5 85.5,137.5M43.5,99.5 67.5,115.5 93.5,139.5M54.5,109.5 40.5,121.5M67.5,109.5 57.5,129.5 54.5,135.5 67.5,132.5M81.5,127.5 67.5,132.5M40.5,121.5 20.5,125.5 16.5,135.5 10.5,141.5 2.5,138.5M2.5,117.5 10.5,116.5 20.5,121.5 30.5,125.5 40.5,124.5M2.5,107.5 10.5,101.5 14.5,99.5M71.5,99.5 81.5,107.5 83.5,119.5 89.5,131.5 99.5,144.5M81.5,107.5 101.5,110.5 122.5,109.5 130.5,107.5 136.5,99.5M2.5,149.5 24.5,145.5 50.5,143.5 81.5,146.5 97.5,147.5M4.5,164.5 12.5,163.5 8.5,174.5M10.5,186.5 20.5,182.5M6.5,198.5 10.5,213.5 6.5,218.5M4.5,209.5 12.5,218.5M106.5,114.5 119.5,110.5M110.5,124.5 163.5,107.5M20.5,164.5 46.5,155.5M53.5,153.5 66.5,149.5M119.5,131.5 132.5,126.5M139.5,124.5 172.5,113.5M29.5,171.5 96.5,149.5M102.5,147.5 129.5,138.5M136.5,136.5 175.5,123.5M33.5,182.5 93.5,162.5M99.5,160.5 172.5,135.5M36.5,191.5 142.5,156.5M149.5,153.5 169.5,147.5M39.5,200.5 59.5,194.5M66.5,191.5 86.5,185.5M92.5,183.5 112.5,176.5M119.5,174.5 205.5,145.5M42.5,210.5 208.5,154.5M45.5,219.5 59.5,215.5M65.5,212.5 158.5,181.5M165.5,179.5 178.5,175.5M185.5,172.5 198.5,168.5M205.5,166.5 211.5,163.5M49.5,229.5 82.5,218.5M88.5,216.5 95.5,213.5M108.5,209.5 142.5,198.5M148.5,196.5 215.5,173.5M85.5,227.5 178.5,196.5M191.5,192.5 218.5,183.5M214.5,194.5 221.5,192.5M19.5,153.5 22.5,162.5M29.5,160.5 54.5,236.5M32.5,149.5 35.5,158.5M38.5,167.5 45.5,186.5M51.5,205.5 61.5,234.5M42.5,156.5 49.5,175.5M52.5,184.5 68.5,232.5M46.5,144.5 49.5,153.5M52.5,163.5 75.5,229.5M53.5,142.5 81.5,227.5M63.5,149.5 88.5,225.5M69.5,147.5 78.5,175.5M84.5,194.5 94.5,223.5M79.5,154.5 82.5,163.5M85.5,173.5 101.5,220.5M85.5,152.5 110.5,228.5M92.5,150.5 118.5,225.5M99.5,147.5 124.5,223.5M102.5,136.5 130.5,221.5M109.5,133.5 115.5,152.5M121.5,171.5 134.5,209.5M109.5,112.5 132.5,178.5M135.5,188.5 144.5,216.5M116.5,110.5 150.5,214.5M122.5,108.5 132.5,136.5M135.5,146.5 157.5,212.5M129.5,105.5 164.5,210.5M138.5,113.5 167.5,198.5M146.5,110.5 177.5,205.5M155.5,118.5 171.5,165.5M174.5,175.5 178.5,184.5M158.5,106.5 171.5,144.5M174.5,154.5 181.5,173.5M184.5,182.5 187.5,192.5M165.5,104.5 172.5,123.5M181.5,151.5 194.5,189.5M188.5,149.5 204.5,196.5M195.5,147.5 207.5,185.5M201.5,145.5 211.5,173.5M214.5,182.5 221.5,201.5M168.5,267.5 179.5,272.5M184.5,275.5 190.5,278.5M206.5,286.5 211.5,289.5M166.5,272.5 192.5,286.5M163.5,276.5 179.5,285.5M190.5,290.5 201.5,296.5M166.5,285.5 171.5,288.5M182.5,293.5 187.5,296.5M163.5,290.5 174.5,295.5M179.5,298.5 195.5,306.5M165.5,299.5 192.5,313.5M163.5,303.5 168.5,306.5M184.5,314.5 190.5,317.5M170.5,266.5 165.5,277.5M175.5,269.5 172.5,274.5M169.5,279.5 166.5,285.5M180.5,271.5 178.5,277.5M172.5,287.5 169.5,293.5M167.5,298.5 164.5,303.5M188.5,269.5 180.5,285.5M171.5,301.5 169.5,306.5M191.5,277.5 175.5,309.5M199.5,274.5 183.5,306.5M204.5,277.5 194.5,298.5M191.5,304.5 185.5,314.5M209.5,279.5 204.5,290.5M196.5,306.5 193.5,312.5M215.5,283.5 210.5,293.5M218.5,300.5 226.5,289.5M208.5,327.5 212.5,322.5M216.5,316.5 220.5,310.5M224.5,304.5 228.5,299.5M214.5,331.5 222.5,320.5M226.5,314.5 230.5,309.5M234.5,303.5 238.5,297.5M216.5,341.5 224.5,330.5M232.5,319.5 236.5,313.5M204.5,341.5 210.5,345.5M208.5,335.5 220.5,344.5M206.5,325.5 218.5,333.5M216.5,323.5 223.5,327.5M208.5,309.5 214.5,313.5M212.5,303.5 224.5,312.5M230.5,316.5 236.5,320.5M222.5,302.5 234.5,310.5M220.5,291.5 226.5,296.5M232.5,300.5 239.5,304.5M22.5,72.5 23.5,77.5M34.5,71.5 33.5,65.5M59.5,58.5 59.5,61.5M36.5,70.5 34.5,68.5M31.5,56.5 35.5,57.5M87.5,73.5 88.5,69.5M106.5,14.5 102.5,10.5M108.5,3.5 112.5,2.5M314.5,24.5 314.5,20.5M332.5,27.5 333.5,23.5M320.5,44.5 324.5,42.5M337.5,56.5 339.5,58.5M406.5,46.5 411.5,46.5M407.5,114.5 411.5,114.5M433.5,36.5 431.5,34.5M427.5,44.5 422.5,43.5M426.5,53.5 423.5,53.5M411.5,41.5 409.5,35.5M423.5,37.5 425.5,41.5M438.5,125.5 437.5,130.5M458.5,137.5 460.5,134.5M465.5,141.5 465.5,137.5M479.5,139.5 476.5,135.5M508.5,136.5 508.5,130.5M459.5,27.5 458.5,23.5M473.5,26.5 476.5,21.5M470.5,49.5 467.5,44.5M464.5,73.5 470.5,73.5M455.5,67.5 456.5,64.5M439.5,60.5 443.5,57.5M445.5,89.5 444.5,92.5M463.5,102.5 466.5,99.5M469.5,110.5 472.5,108.5M475.5,116.5 476.5,111.5M481.5,91.5 477.5,93.5M439.5,97.5 438.5,100.5M461.5,104.5 457.5,106.5M437.5,116.5 437.5,112.5M428.5,112.5 422.5,112.5M428.5,101.5 422.5,101.5M471.5,120.5 471.5,125.5M447.5,38.5 446.5,41.5M446.5,47.5 445.5,50.5M457.5,46.5 452.5,48.5M475.5,85.5 478.5,88.5M478.5,79.5 481.5,77.5M473.5,72.5 478.5,69.5M513.5,74.5 517.5,78.5M532.5,78.5 528.5,80.5M506.5,88.5 502.5,88.5M509.5,101.5 513.5,99.5M513.5,109.5 516.5,106.5M522.5,116.5 521.5,120.5M536.5,117.5 536.5,114.5M515.5,94.5 515.5,89.5M527.5,96.5 528.5,92.5M535.5,98.5 536.5,95.5M531.5,104.5 531.5,109.5M445.5,13.5 444.5,18.5M419.5,6.5 415.5,10.5M347.5,5.5 343.5,8.5M297.5,21.5 297.5,17.5M309.5,19.5 310.5,24.5M306.5,17.5 301.5,15.5" stroke="#f0e23e" stroke-width="1.25"/><path d="M61.5,0.5 64.5,12.5 67.5,27.5 65.5,39.5 67.5,49.5 72.5,60.5 71.5,75.5 70.5,90.5 73.5,101.5 81.5,108.5 82,110.5M82,110.5 84.5,120.5 84.8,122M84.8,122 86.5,132.5 89.6,139.6M89.6,139.6 90.5,141.5 99.5,147.5M81.5,108.5 94.7,109.5M94.7,109.5 105.8,110.3M105.8,110.3 108.5,110.5 129.5,109.5 130.8,107.4M130.8,107.4 131.8,105.8M131.8,105.8 137.5,96.5 147.5,81.5 155.5,73.5 157,71.8M157,71.8 169.5,57.5 181.5,42.5 187.7,34.7M187.7,34.7 193.5,27.5 200.5,18.5 205.7,12.7M205.7,12.7 206.7,11.6M206.7,11.6 208.5,9.5 215.5,0.5M72.5,60.5 76.4,53.5M76.4,53.5 77.5,51.5 81.5,30.5 87.5,26.5 105.5,25.5 135.5,25.5 166.5,26.5 193.5,27.5M67.5,49.5 76.4,53.5M76.4,53.5 78.5,54.5 90.5,58.5 100.6,61.9M100.6,61.9 105.5,63.5 119.5,64.5 129.5,60.5 136.3,58.2M136.3,58.2 136.4,58.2M136.4,58.2 138.5,57.5 141.5,60.5M141.5,60.5 147.5,66.5 155.5,73.5M18.5,35.5 40.5,35.5M40.5,35.5 64.5,35.5M3.5,45.5 3.8,49.5M3.8,49.5 4.4,58.5M4.4,58.5 4.5,60.5 12.5,63.5 13.5,72.5M13.5,45.5 13.5,49.3M13.5,49.3 13.5,54.5M13.5,54.5 13.5,58.5M13.5,58.5 13.5,63.9M13.5,63.9 13.5,72.5M22.5,45.5 22.5,49.2M22.5,49.2 22.5,63.5M31.5,45.5 31.5,49M31.5,49 31.5,55.5M31.5,55.5 31.5,60.5M40.5,35.5 40.5,48.9M40.5,48.9 40.5,58.5M48.5,45.5 48.5,48.8M48.5,48.8 48.5,58.5M57.5,42.5 57.5,48.6M57.5,48.6 57.5,58.5M64.5,35.5 64.5,49.5M3.5,49.5 13.5,49.3M13.5,49.3 22.5,49.2M22.5,49.2 31.5,49M31.5,49 40.5,48.9M40.5,48.9 48.5,48.8M48.5,48.8 57.5,48.6M57.5,48.6 64.5,48.5M3.5,58.5 13.5,58.5M13.5,58.5 18.5,58.5M4.5,70.5 13.4,71.8M13.4,71.8 13.5,71.8M13.5,71.8 18.5,72.5 36.5,70.5 39.5,73.5M37.5,58.5 40.5,58.5M40.5,58.5 48.5,58.5M48.5,58.5 57.5,58.5M57.5,58.5 64.5,58.5 61.5,63.5M36.5,64.5 39.5,67.5 36.5,70.5M22.5,63.5 30.5,61.5 31.5,55.5M6.5,54.5 12.5,54.5M135.5,57.5 157.5,28.5M141.5,60.5 169.5,28.5M147.5,64.5 181.5,30.5M154.5,70.5 187.7,34.7M187.7,34.7 193.5,28.5M160.5,72.5 196.5,33.5M122.5,46.5 135.5,57.5 136.4,58.2M136.4,58.2 147.5,66.5 154.5,70.5M154.5,70.5 157,71.8M157,71.8 159.7,73.4M159.7,73.4 163.5,75.5 182.5,80.5M122.5,46.5 132.5,36.5 141.5,30.5M129.5,49.5 144.5,30.5M110.5,52.5 120.5,54.5 129.5,60.5M178.5,60.5 187.5,58.5 200.5,59.5M199.5,18.5 211.5,31.5 216.5,25.5 206.3,13.5M206.3,13.5 205.5,12.5M75.5,64.5 77.5,61.5 83.5,61.5 86.5,64.5 84.5,72.5 89.5,73.5 92.5,67.5 96.5,63.5 101.5,61.5M116.5,69.5 119.5,73.5 120.5,80.5 129.5,80.5 132.5,72.5M73.5,9.5 77.5,3.5 80.5,0.5M87.5,21.5 99.5,19.5 107.5,13.5 108.5,6.5 107.5,0.5M114.5,0.5 116.5,13.5M123.5,0.5 125.5,6.5M87.5,21.5 81.5,30.5M151.5,9.5 152.5,21.5 163.5,24.5 169.5,18.5 174.5,15.2M174.5,15.2 177.5,13.2M177.5,13.2 178.5,12.5 188.5,10.5 194.5,15.5M154.5,9.5 160.5,3.5 172.5,3.5 176.5,7.5M187.5,3.5 187.5,9.5M208.5,0.5 206.5,12.5M172.5,18.5 174.5,15.2M174.5,15.2 175.5,13.5 177.5,13.2M177.5,13.2 181.5,12.5M247.5,12.5 250.5,6.5 259.5,3.5 270.5,1.5M255.5,27.5 262.5,22.5 270.5,21.5M258.5,0.5 259.8,3.4M259.8,3.4 259.8,3.4M259.8,3.4 262.5,9.5 269.4,7.8M269.4,7.8 270.5,7.5M199.5,107.5 211.5,105.5 223.5,107.5 234.5,111.5 238.5,119.5 237.5,129.5 232.5,134.5 220.5,135.5 211.5,129.5 208.5,125.5 214.5,119.5 223.5,108.5M214.5,119.5 229.5,132.5M208.5,125.5 205.5,128.5M163.5,132.5 178.5,141.5 193.5,144.5 211.5,141.5 229.5,141.5 247.5,144.5 270.5,146.5M211.5,141.5 235.5,144.5 236.8,144.8M236.8,144.8 256.5,149.5 270.5,151.5M3.5,107.5 8.9,102.7M8.9,102.7 9.9,101.8M9.9,101.8 12.5,99.5 13.9,99.8M13.9,99.8 22.5,101.5 30.5,107.5 39.5,116.5 43.3,119.1M43.3,119.1 45.5,120.5 37.8,124.8M37.8,124.8 36.5,125.5 34.2,125.1M34.2,125.1 27.8,124M27.8,124 26.2,123.8M26.2,123.8 24.5,123.5 20.5,125.5M20.5,125.5 18.5,126.5 16.2,135.8M16.2,135.8 15.5,138.5 12.5,139.5M12.5,139.5 8.6,140.8M8.6,140.8 6.5,141.5M3.5,116.5 5.4,117.1M5.4,117.1 12.5,119.5 24.5,123.5M22.5,98.5 44.7,117.9M44.7,117.9 46.5,119.5M46.5,119.5 54.5,126.5 57.1,129.1M57.1,129.1 57.5,129.5M57.5,129.5 60.5,132.5M28.5,97.5 35.5,103.1M35.5,103.1 49.1,114.1M49.1,114.1 50.6,115.3M50.6,115.3 60.6,123.3M60.6,123.3 64.5,126.5 65.7,127.3M65.7,127.3 71.2,131.2M71.2,131.2 84.5,140.5M36.5,97.5 39.7,100.5M39.7,100.5 48.5,108.5 52.8,111M52.8,111 54.1,111.7M54.1,111.7 54.2,111.8M54.2,111.8 63.7,117.2M63.7,117.2 69.5,120.5M39.5,94.5 60.5,99.5 69.5,101.5M45.5,101.5 53.5,106.2M53.5,106.2 57.5,108.5 66.2,112.1M66.2,112.1 69.5,113.5M45.5,120.5 46.5,119.5M46.5,119.5 50.6,115.3M50.6,115.3 51.3,114.7M51.3,114.7 54.2,111.8M54.2,111.8 54.2,111.8M54.2,111.8 55.5,110.5 61.5,111.5M55.5,129.5 55.9,132.7M55.9,132.7 56.2,135.1M56.2,135.1 57.5,144.5 60.5,157.5 63.5,176.5M55.5,129.5 57.2,129.1M57.2,129.1 57.7,129M57.7,129 65.7,127.3M65.7,127.3 69.5,126.5M3.5,149.5 4.7,149.1M4.7,149.1 18.5,144.5 37.5,144.5M37.5,144.5 39.5,144.5 55.5,144.5 57.5,144.5M57.5,144.5 60.8,144.5M60.8,144.5 78.5,144.5M3.5,164.5 12.5,163.5 18.5,157.5 27.5,154.5M3.5,154.5 9.5,152.5 18.5,151.5M268.5,6.5 269.4,7.8M269.4,7.8 272.4,11.8M272.4,11.8 277.5,18.5 284.5,30.5 290.5,40.5 301.5,48.5 313.5,54.5 323.5,60.5 328.4,61.9M328.4,61.9 337.5,64.5 352.5,65.5 356.5,66.5M323.5,60.5 320.5,64.5 319.7,67.5M319.7,67.5 318,73.5M318,73.5 317.5,75.5 317,80.5M317,80.5 316.5,86.5 323.5,90.5 331.5,96.5 335.5,99.5M307.5,28.5 313.5,24.5 320.5,25.5 323.5,30.5 328.5,27.5 335.5,28.5 337.5,33.5M316.5,33.5 319.5,42.5 322.5,49.5M329.5,55.5 332.5,49.5 338.5,48.5 340.5,54.5 335.5,57.5M328.5,61.5 327.3,67.5M327.3,67.5 326.2,73.5M326.2,73.5 324.8,80.5M324.8,80.5 323.5,87.5M317.5,67.5 319.7,67.5M319.7,67.5 327.5,67.5M317.5,73.5 326.5,73.5M316.5,80.5 325.5,80.5M373.5,24.5 374.5,42.5 373.5,60.5 373.5,87.5 373.5,104.5M373.5,104.5 373.5,120.5 375.5,144.5 376.3,152.6M376.3,152.6 376.4,154.5M376.4,154.5 376.9,159.4M376.9,159.4 377,160.1M377,160.1 377.1,161.7M377.1,161.7 378.5,176.5M382.5,22.5 383.5,34.5 400.5,35.5 402.5,25.5 390.5,25.5 390.5,33.5M373.5,42.5 374.5,42.7M374.5,42.7 374.5,42.7M374.5,42.7 379.5,43.5 388.5,45.5 394.1,45M394.1,45 400.5,44.5 405.5,42.5M379.5,43.5 382.5,48.5 388.5,49.5 393.5,45.5M405.5,36.5 406.5,42.5 406.5,87.5 407.4,105.5M407.4,105.5 408.5,129.5 408.5,151.5M356.5,87.5 359.5,87.5M359.5,87.5 373.5,87.5 406.5,87.5 422.5,87.5 437.5,89.5 447.8,90.4M447.8,90.4 449.5,90.5M359.5,104.5 373.5,104.5M359.5,119.5 373.5,119.5M399.5,105.5 406.5,105.5M467.5,0.5 465.5,12.5 458.5,21.5 446.5,28.5 432.5,34.5 423.5,42.5 421.5,54.5 422.5,87.5 422.5,120.5 424.8,129.5M424.8,129.5 424.8,129.7M424.8,129.7 425.5,132.5 425.5,141.5 419.5,149.5 408.5,152M408.5,152 406.5,152.5 391.5,149.5 375.5,144.5M437.5,33.5 428.5,40.5 427.9,44.7M427.9,44.7 426.5,54.5 427.5,78.5M400.5,44.5 406.5,42.5M406.5,42.5 412.5,40.5 432.5,34.5M408.5,129.5 425.5,129.5 437.5,125.5 449.5,126.5 456.5,135.5 465.5,141.5 476.5,141.5 483.5,136.5 509.5,136.5 524.5,134.5 538.5,129.5M452.5,135.5 450.5,152.5M476.5,141.5 475.5,153.5M509.5,136.5 510.5,153.5 511.5,164.5M394.5,152.5 405.6,152.7M405.6,152.7 449.5,153.5 475.5,153.5M475.5,153.5 509.5,153.5 510.5,153.5M510.5,153.5 520.2,153.9M520.2,153.9 520.4,153.9M520.4,153.9 538.5,154.5M449.5,30.5 461.5,27.5 473.5,26.5 480.5,30.5 481.5,39.5 473.5,48.5 461.5,54.5 452.5,58.5 443.5,64.5 455.5,75.5 462.5,84.5 464.5,72.5 456.5,67.5 449.5,64.5M428.5,45.5 434.5,53.5M434.5,53.5 437.5,57.5 443.5,64.5 437.5,78.5 443.5,87.5 447.8,90.4M447.8,90.4 452.5,93.5 461.5,99.5 467.5,107.5 473.5,116.5 485.5,117.5 493.5,110.5 491.5,104.5 486.2,105.2M486.2,105.2 483.5,105.5M479.5,81.5 480.5,90.5 486.5,99.5 486.2,105.2M486.2,105.2 485.5,117.5M428.5,99.5 437.5,96.5 446.5,98.8M446.5,98.8 449.5,99.5 461.5,104.5 464.5,111.5 461.5,116.5 446.5,116.5M446.5,116.5 437.5,116.5 428.5,114.5 428.5,99.5M437.5,96.5 437.5,116.5M446.5,99.5 446.5,116.5M455.5,129.5 464.5,120.5 473.5,120.5 480.5,129.5 483.5,136.5M434.5,54.5 434.5,75.5M441.5,36.5 449.5,39.5 455.5,36.5M440.5,45.5 449.5,48.5 456.5,45.5 461.5,54.5M449.5,48.5 452.5,58.5M462.5,84.5 473.5,87.5 479.5,81.5 473.5,72.5 467.5,63.5 464.5,60.5M452.5,93.5 449.5,99.5M467.5,107.5 476.5,102.5 483.5,105.5M506.5,81.5 515.5,72.5 524.5,70.5 530.5,75.5 536.9,87.5M536.9,87.5 538.5,90.5M506.5,81.5 506.5,86.5M506.5,86.5 506.5,93.5M506.5,93.5 506.5,96.5 512.5,108.5 521.5,116.5 538.5,117.5M506.5,86.5 536.9,87.4M536.9,87.4 538.5,87.5M506.5,93.5 524.5,95.5 538.5,99.5M512.5,108.5 524.5,104.5 538.5,105.5M527.5,61.5 538.5,69.5M518.5,136.5 527.5,144.5 520.5,153.5 518.5,164.5M538.5,138.5 527.5,144.5M406.5,13.5 409.5,13.5M409.5,13.5 425.5,13.5 437.5,12.5 449.5,13.5M408.5,0.5 409.5,13.5M415.5,3.5 425.5,13.5 432.5,6.5 431.5,0.5M437.5,13.5 440.5,27.5M338.5,0.5 346.5,3.5 348.5,6.5M268.5,13.5 272.4,11.7M272.4,11.7 277.5,9.5 286.5,10.5 295.5,16.5 298.5,12.5 305.5,10.2M305.5,10.2 307.5,9.5M286.5,19.5 298.5,21.5 305,20.4M305,20.4 310.5,19.5 316.5,19.5M316.5,19.5 325.5,19.5M325.5,19.5 328.5,19.5M292.5,39.5 298.5,33.5 301.5,27.5M268.5,0.5 270.1,1.6M270.1,1.6 274.5,4.5 283.5,3.5 289.5,7.5M304.5,7.5 305.5,10.2M305.5,10.2 307.5,15.5 305.5,19.5M313.5,12.5 316.5,19.5M323.5,13.5 325.5,19.5M268.5,147.5 298.5,151.5 328.5,154.5 356.5,157.5 359.5,157.8M359.5,157.8 373.7,159.1M373.7,159.1 376.9,159.4M376.9,159.4 377.5,159.5M377.5,159.5 388.5,160.5 419.5,163.5 443.5,169.5 461.5,176.5M322.5,157.5 348.4,159M348.4,159 349.7,159.1M349.7,159.1 356.5,159.5 359.5,159.8M359.5,159.8 364.7,160.4M364.7,160.4 366,160.5M366,160.5 367.9,160.7M367.9,160.7 373.9,161.3M373.9,161.3 375.8,161.5M375.8,161.5 377.1,161.7M377.1,161.7 394.5,163.5 425.5,167.5 449.5,176.5M375.5,144.5 374.5,151.3M374.5,151.3 374.1,153.3M374.1,153.3 373.5,157.5 373.7,159.1M373.7,159.1 373.9,161.3M373.9,161.3 374.1,163.5M374.1,163.5 375.5,176.5M293.5,154.5 292.5,164.5 295.5,176.5M322.5,158.5 334.5,164.5 335.3,165.9M335.3,165.9 335.7,166.6M335.7,166.6 341.5,176.5M359.5,132.5 361.5,136M361.5,136 363.2,138.8M363.2,138.8 366.8,145.2M366.8,145.2 367,145.5M367,145.5 367.4,146.2M367.4,146.2 370.5,151.5 372.2,152.4M372.2,152.4 372.8,152.6M372.8,152.6 374.1,153.3M374.1,153.3 376.4,154.5M376.4,154.5 388.5,160.5M352.5,65.5 351.5,90.5 351.5,114.5 353.9,129M353.9,129 354.5,132.5M356.5,0.5 356.5,66.5M356.5,66.5 356.5,87.5M356.5,87.5 356.5,119.5M356.5,119.5 356.5,157.5M356.5,157.5 356.5,159.6M356.5,159.6 356.5,175.5 356.5,249.5 358.7,285.6M358.7,285.6 359.5,299.5 362.3,316.5M362.3,316.5 364.5,329.5 366.9,340M366.9,340 369.5,351.5M359.5,0.5 359.5,87.5M359.5,87.5 359.5,104.4M359.5,104.4 359.5,119.5M359.5,119.5 359.5,132.4M359.5,132.4 359.5,148M359.5,148 359.5,151.5M359.5,151.5 359.5,154M359.5,154 359.5,157.8M359.5,157.8 359.5,159.8M359.5,159.8 359.5,163.1M359.5,163.1 359.5,166.6M359.5,166.6 359.5,169M359.5,169 359.5,175.5 359.5,218.5M359.5,218.5 359.5,249.5 361.7,285.6M361.7,285.6 362.5,299.5 365.3,316.5M365.3,316.5 366.8,325.4M366.8,325.4 367.5,329.5 368.5,333.9M368.5,333.9 372.5,351.5M355.5,150.5 354.5,153.5 350.5,155.5 347.5,155.5 343.5,153.5 342.5,150.5 343.5,146.5 347.5,144.5 350.5,144.5 354.5,146.5 355.5,150.5M372.5,151.5 371.5,154.5 367.5,156.5 364.5,156.5 360.5,154.5 359.5,151.5 360.5,147.5 364.5,145.5 366.5,145.5M366.5,145.5 367.5,145.5 371.5,147.5 372,149.5M372,149.5 372.5,151.5M355.5,165.5 354.5,168.5 350.5,170.5 347.5,170.5 343.5,168.5 342.5,165.5 343.5,161.5 347.5,159.5 350.5,159.5 354.5,161.5 355.5,165.5M372.5,166.5 371.5,169.5 367.5,171.5 364.5,171.5 360.5,169.5 359.5,166.5 360.5,162.5 364.5,160.5 366,160.5M366,160.5 367.5,160.5 371.5,162.5 372.5,166.5M322.5,159.5 334.5,165.5 335.7,166.6M335.7,166.6 345.5,175.5 349.1,182.7M349.1,182.7 350.5,185.5 352.5,206.5 353.5,225.5M377.5,159.5 375.8,161.5M375.8,161.5 374.1,163.5M374.1,163.5 372.3,165.7M372.3,165.7 367.3,171.5M367.3,171.5 367.2,171.6M367.2,171.6 366.5,172.5 361.5,188.5 360.5,206.5M326.5,153.5 340.5,148.5 343.7,145.6M343.7,145.6 349.5,140.5 353.9,129M353.9,129 354.5,127.5 356.5,119.5M360.5,119.5 361.5,135.5 363.2,138.8M363.2,138.8 366.5,145.5 367.4,146.2M367.4,146.2 372,149.5M372,149.5 374.5,151.3M374.5,151.3 376.3,152.6M376.3,152.6 377.5,153.5 390.5,159.5M236.5,144.5 241.5,149.5 250.5,155.5 259.5,165.5 269.5,176.5 279.5,188.5 280.5,191.3M280.5,191.3 281.6,194.2M281.6,194.2 283.5,199.5M259.5,167.5 257.5,180.5 251.5,199.5M258.5,182.5 263,179.5M263,179.5 267.5,176.5M256.5,200.5 270.7,195M270.7,195 278.1,192.2M278.1,192.2 280.5,191.3M280.5,191.3 282.5,190.5M263.5,180.5 270.8,195M270.8,195 271.5,196.5M269.5,178.5 278.1,192.2M278.1,192.2 279.5,194.5M250.5,174.5 248.5,180.5 249.5,188.5 246.5,194.5 247.5,199.5 250.5,199.5M229.5,194.5 231.5,204.5 232.9,206.8M232.9,206.8 237.5,214.5 245.5,219.5 251.5,218.5M180.5,190.5 198.5,199.5M198.5,199.5 202.6,201.6M202.6,201.6 230.5,215.5M180.5,197.5 192.2,202.9M192.2,202.9 201.2,207M201.2,207 230.5,220.5M184.5,204.5 187,205.7M187,205.7 199.9,211.8M199.9,211.8 228.5,225.5M188.5,212.5 198.3,217.7M198.3,217.7 220.5,229.5M180.5,186.5 203.6,197.6M203.6,197.6 232.5,211.5M204.5,194.5 203.7,197.7M203.7,197.7 202.6,201.6M202.6,201.6 201.2,207M201.2,207 199.9,211.8M199.9,211.8 198.3,217.7M198.3,217.7 196.5,224.5M349.5,175.5 349.1,182.7M349.1,182.7 348.5,193.5 351.5,220.5 354.5,250.5 354.5,285.6M354.5,285.6 354.5,295.5 357.2,316.5M357.2,316.5 358.5,326.5 362.7,341.5M362.7,341.5 363.5,344.5M367.5,175.5 363.5,184.5 361.5,205.5 360.6,218.5M360.6,218.5 360.5,220.5M375.5,175.5 375.5,186.5M375.5,186.5 375.5,218.6M375.5,218.6 375.5,220.5 375.5,245.5M375.5,245.5 375.5,265.5M375.5,265.5 375.5,274.5 374.4,285.7M374.4,285.7 373.5,295.5 367.5,310.5 367.2,316.5M367.2,316.5 366.8,325.4M366.8,325.4 366.5,332.5 366.9,340M366.9,340 367.5,351.5M394.5,218.5 394.5,238.4M394.5,238.4 394.5,245.5M394.5,245.5 394.5,265.4M394.5,265.4 394.5,274.5M394.5,274.5 394.5,285.8M394.5,285.8 394.5,316.5M394.5,316.5 394.5,351.5M400.5,175.5 401.2,186.5M401.2,186.5 402.5,205.5 406,218.8M406,218.8 406.5,220.5 409.5,235.5M409.5,175.5 409.5,179.5M409.5,179.5 409.5,191.5M409.5,191.5 409.5,208.6M409.5,208.6 409.5,218.8M409.5,218.8 409.5,235.5M409.5,235.5 409.5,245.5M409.5,245.5 409.5,265.4M409.5,265.4 409.5,274.4M409.5,274.4 409.5,285.9M409.5,285.9 409.5,316.5M409.5,316.5 409.5,351.5M360.5,218.5 375.5,218.6M375.5,218.6 394.5,218.7M394.5,218.7 406.1,218.8M406.1,218.8 409.4,218.8M409.4,218.8 419.4,218.8M419.4,218.8 473.5,219.1M473.5,219.1 480.5,219.2M480.5,219.2 489.5,219.2M489.5,219.2 499.5,219.3M499.5,219.3 503.4,219.3M503.4,219.3 511.4,219.3M511.4,219.3 531.4,219.5M531.4,219.5 538.5,219.5M268.5,276.5 292.5,282.5 294.1,282.6M294.1,282.6 294.4,282.6M294.4,282.6 294.5,282.6M294.5,282.6 301.6,283M301.6,283 306.8,283.3M306.8,283.3 325.5,284.4M325.5,284.4 325.6,284.4M325.6,284.4 341.5,285.4M341.5,285.4 343.5,285.5 354.4,285.6M354.4,285.6 358.7,285.6M358.7,285.6 361.6,285.6M361.6,285.6 374.5,285.7M374.5,285.7 394.6,285.8M394.6,285.8 409.4,285.8M409.4,285.8 431.4,286M431.4,286 437.5,286M437.5,286 447.4,286M447.4,286 455.4,286.1M455.4,286.1 462.4,286.1M462.4,286.1 476.5,286.2M476.5,286.2 483.5,286.2M483.5,286.2 485.5,286.2M485.5,286.2 491.5,286.3M491.5,286.3 500.5,286.3M500.5,286.3 506.5,286.3M506.5,286.3 511.6,286.4M511.6,286.4 518.4,286.4M518.4,286.4 527.6,286.4M527.6,286.4 536.5,286.5M536.5,286.5 538.5,286.5M375.5,186.5 400.5,186.5M409.5,191.5 473.5,191.5M375.5,245.5 394.5,245.5M394.5,245.5 409.5,245.5M381.5,256.5 391.5,256.5M375.5,265.5 394.5,265.5M394.5,265.5 409.5,265.5M394.5,274.5 409.5,274.5M343.5,316.5 357.2,316.5M357.2,316.5 362.3,316.5M362.3,316.5 365.3,316.5M365.3,316.5 367.2,316.5M367.2,316.5 367.5,316.5M367.5,316.5 394.5,316.5M394.5,316.5 400.5,316.5M400.5,316.5 409.5,316.5M409.5,316.5 419.5,316.5M343.5,341.5 351.5,341.5M351.5,341.5 362.7,341.5M362.7,341.5 364.5,341.5M409.5,179.5 437.5,178.5M409.5,208.5 425.5,206.5 428.3,206.6M428.3,206.6 428.6,206.6M428.6,206.6 459.1,207.9M459.1,207.9 473.5,208.5M449.5,205.5 455.5,200.5 473.5,200.5 473.5,208.5M473.5,208.5 473.5,219.5M449.5,205.5 459.1,207.9M459.1,207.9 461.5,208.5M419.5,219.5 419.5,232.5 425.5,232.5M422.5,200.5 428.5,206.5 434.5,202.5M425.5,206.5 423.5,215.5M511.5,175.5 511.5,187.5M511.5,187.5 511.5,194.5M511.5,194.5 511.5,198.9M511.5,198.9 511.5,199M511.5,199 511.5,202.3M511.5,202.3 511.5,207.4M511.5,207.4 511.5,219.4M511.5,219.4 511.5,248.5M511.5,248.5 511.5,254.5M511.5,254.5 511.5,256.5M511.5,256.5 511.5,261.5M511.5,261.5 511.5,270.5M511.5,270.5 511.5,285.5M485.5,235.5 485.5,250.5M485.5,250.5 485.5,253.5M485.5,253.5 485.5,261.5M485.5,261.5 485.5,269.5M485.5,269.5 485.5,285.5M461.5,220.5 461.5,236.5M461.5,236.5 461.5,244.5M443.5,236.5 461.5,236.5M461.5,236.5 485.5,236.5M473.5,238.5 485.5,250.5M476.5,232.5 494.5,232.5M480.5,193.5 480.5,219.5M489.5,199.5 489.5,219.5M499.5,208.5 499.5,219.3M499.5,219.3 499.5,253.5M503.5,219.5 503.5,235.5M485.5,253.5 499.5,254M499.5,254 511.5,254.5M485.5,261.5 511.5,261.5M485.5,269.5 511.5,270.5M511.5,248.5 527.5,248.5M511.5,256.5 538.5,257.5M499.5,187.5 511.5,187.5M511.5,194.5 514,194.5M514,194.5 518.2,194.5M518.2,194.5 530.5,194.5M518.5,193.5 518.3,194.5M518.3,194.5 517.6,196.9M517.6,196.9 517.4,197.8M517.4,197.8 517.3,198.3M517.3,198.3 516.4,201.8M516.4,201.8 515.5,205.5M409.5,245.5 415.5,247.5 419.5,243.5 443.5,243.5M415.5,247.5 419.5,251.5 443.5,252.5M394.5,238.5 400.5,238.5M431.5,286.5 431.5,291.5M431.5,291.5 431.5,295.5M431.5,295.5 431.5,300.5M431.5,300.5 431.5,304.5M431.5,304.5 431.5,309.5M431.5,309.5 431.5,313.7M431.5,313.7 431.5,319.5M431.5,319.5 431.5,326.5M431.5,326.5 431.5,332.5M431.5,332.5 431.5,338.5M431.5,338.5 431.5,351.5M437.5,286.5 437.5,291.5M437.5,291.5 437.5,295.5M437.5,295.5 437.5,300.5M437.5,300.5 437.5,304.5M437.5,304.5 437.5,309.5M437.5,309.5 437.5,314M437.5,314 437.5,319.5M437.5,319.5 437.5,326.5M437.5,326.5 437.5,332.5M437.5,332.5 437.5,351.5M447.5,286.5 447.5,314.4M447.5,314.4 447.5,316.5M447.5,316.5 447.5,322.5M447.5,322.5 447.5,351.5M455.5,286.5 455.5,351.5M462.5,286.5 463.5,351.5M476.5,286.5 476.5,312.5M476.5,312.5 476.5,351.5M483.5,286.5 483.5,312.5M483.5,312.5 483.5,319.5M483.5,319.5 483.5,351.5M491.5,286.5 491.9,312.5M491.9,312.5 492,319.5M492,319.5 492.5,351.5M500.5,286.5 500.9,312.5M500.9,312.5 501.5,351.5M506.5,286.5 506.9,312.5M506.9,312.5 507.5,351.5M518.5,286.5 519.5,351.5M527.5,286.5 527.7,302.4M527.7,302.4 527.8,307.5M527.8,307.5 528.3,338.5M528.3,338.5 528.5,351.5M536.5,286.5 536.7,298.5M536.7,298.5 536.8,307.5M536.8,307.5 537.3,338.5M537.3,338.5 537.5,351.5M428.5,291.5 431.5,291.5M431.5,291.5 437.5,291.5M437.5,291.5 443.5,291.5M428.5,295.5 431.5,295.5M431.5,295.5 437.5,295.5M437.5,295.5 443.5,295.5M428.5,300.5 431.5,300.5M431.5,300.5 437.5,300.5M437.5,300.5 444.5,300.5M428.5,304.5 431.5,304.5M431.5,304.5 437.5,304.5M437.5,304.5 443.5,304.5M428.5,309.5 431.5,309.5M431.5,309.5 437.5,309.5M437.5,309.5 443.5,309.5M426.5,313.5 431.5,313.7M431.5,313.7 437.5,314M437.5,314 447.5,314.4M447.5,314.4 449.5,314.5M428.5,319.5 431.5,319.5M431.5,319.5 437.5,319.5M428.5,326.5 431.5,326.5M431.5,326.5 432.5,326.5M432.5,326.5 437.5,326.5M431.5,332.5 437.5,332.5M443.5,316.5 447.5,316.5M447.5,316.5 452.5,316.5M443.5,322.5 447.5,322.5M447.5,322.5 450.5,322.5M470.5,312.5 476.5,312.5M476.5,312.5 483.5,312.5M483.5,312.5 491.9,312.5M491.9,312.5 500.9,312.5M500.9,312.5 506.9,312.5M506.9,312.5 509.5,312.5M479.5,319.5 483.5,319.5M483.5,319.5 491.5,319.5M521.5,307.5 523.5,307.5M523.5,307.5 527.8,307.5M527.8,307.5 536.5,307.5M521.5,313.5 523.5,307.5M523.5,307.5 524.5,304.5 527.7,302.3M527.7,302.3 533.5,298.5 536.7,298.5M536.7,298.5 538.5,298.5M521.5,313.5 522.5,351.5M527.5,338.5 537.3,338.5M537.3,338.5 538.5,338.5M426.5,313.5 427.4,319.5M427.4,319.5 428.5,326.5 425.5,338.5 423.5,351.5M432.5,326.5 432,332.5M432,332.5 431.5,338.5M455.5,175.5 479.5,187.5 503.5,202.5 511.5,207.5M511.5,207.5 524.5,215.5 531.4,219.5M531.4,219.5 538.5,223.5M459.5,175.5 461.5,176.5M461.5,176.5 483.5,187.5 508.5,200.5 511.5,202.4M511.5,202.4 515.6,205M515.6,205 527.5,212.5 534,216M534,216 538.5,218.5M464.5,175.5 488.5,187.5 511.5,199M511.5,199 512.5,199.5 516.4,201.8M516.4,201.8 526.2,207.4M526.2,207.4 538.5,214.5M515.5,196.5 517.3,198.3M517.3,198.3 524.5,205.5 526.2,207.4M526.2,207.4 533.5,215.5M512.5,193.5 514,194.5M514,194.5 517.6,196.9M517.6,196.9 518.5,197.5 530.5,194.5M293.5,175.5 292.5,184.5 283.5,193.5 281.6,194.1M281.6,194.1 279.7,194.8M279.7,194.8 274.5,196.5 271.7,197M271.7,197 268.5,197.5M268.5,205.5 280.5,202.5 286.5,208.5 287.1,215.6M287.1,215.6 287.5,220.5 286.6,223.2M286.6,223.2 285.8,225.6M285.8,225.6 283.5,232.5 279.7,235M279.7,235 277.2,236.7M277.2,236.7 276.2,237.4M276.2,237.4 274.5,238.5 268.5,239.5M283.5,193.5 289.5,205.5 287.5,220.5M268.5,253.5 274.5,247.5 276.9,238M276.9,238 277.2,236.7M277.2,236.7 277.5,235.5M341.5,245.5 334.5,250.5 330.9,255.4M330.9,255.4 328.5,258.5 326.5,265.5 327.6,266M327.6,266 328,266.2M328,266.2 328.2,266.4M328.2,266.4 332.5,268.5 341.5,262.5M295.5,274.5 301.5,268.5 310.1,267.9M310.1,267.9 316.5,267.5 319.2,268.2M319.2,268.2 328.5,270.5 341.5,271.5M293.5,277.5 293.9,281.4M293.9,281.4 293.9,281.4M293.9,281.4 294.1,282.6M294.1,282.6 294.5,286.5M294.5,286.5 295.5,295.5 294.5,302.8M294.5,302.8 294.5,303M294.5,303 293.5,310.5 293.9,312.5M293.9,312.5 296.5,326.5 301.5,338.5 304.5,351.5M301.5,285.5 305.5,301.5 310.5,316.5 316.5,332.5 317.5,335.5M317.5,335.5 320.5,344.5 322.5,351.5M268.5,300.5 273.8,309.4M273.8,309.4 274.5,310.5 283.5,313.5 292.5,326.5 293.4,312.6M293.4,312.6 293.5,310.5M325.5,277.5 325.5,284.4M325.5,284.4 325.5,285M325.5,285 325.5,285.5M325.5,285.5 325.5,294.5M325.5,294.5 325.5,304.5M325.5,294.5 335.5,294.5M335.5,294.5 341.5,294.5M341.5,245.5 341.5,262.5M341.5,262.5 341.5,271.5M341.5,271.5 341.5,276.5M341.5,276.5 341.5,285.4M341.5,285.4 341.5,294.5M341.5,294.5 341.5,315.5M341.5,315.5 341.5,351.5M325.5,276.5 341.5,276.5M323.5,315.5 341.5,315.5M323.5,319.5 338.5,319.5M281.5,288.5 292.5,286.5M268.5,332.5 272.5,344.5 278,349.3M278,349.3 280.5,351.5M349.5,332.5 351.5,341.5 358.5,341.5M400.5,316.5 400.5,341.5M409.5,316.5 419.5,316.5M367.5,316.5 368.5,333.9M368.5,333.9 369.5,351.5M36.5,209.5 44.5,223.5 48.5,235.5 46.5,249.5 45.5,264.5 48.5,274.5 55.5,280.5 69.5,282.5 84.5,278.5 98.5,274.5 113.5,268.5 125.5,265.5M2.5,223.5 7.2,223.1M7.2,223.1 7.3,223.1M7.3,223.1 7.4,223.1M7.4,223.1 14.5,222.5 28.5,218.5 38.5,216.5M3.5,213.5 5.8,219.3M5.8,219.3 7.5,223.5 9.5,235.5 8.8,236.4M8.8,236.4 4.5,241.5M7.5,223.5 18.5,240.5 12.9,240.9M12.9,240.9 4.5,241.5M3.5,230.5 8.8,236.4M8.8,236.4 12.5,240.5M45.5,264.5 62.5,264.5 81.5,266.5 84.5,263.5M53.5,234.5 69.5,230.5 84.5,227.5 101.5,223.5 106.4,222.2M106.4,222.2 118.3,219.1M118.3,219.1 120.5,218.5 134.5,215.5M53.5,234.5 56.5,243.5 65.5,242.5 71.5,249.5M69.5,230.5 72.5,242.5 78.5,245.5M72.5,234.5 86.5,231.5M71.5,258.5 79.5,252.5 91.5,242.5 103.5,237.5 113.5,240.5M83.5,255.5 86.5,247.5 96.5,241.5 106.5,242.5 113.5,248.5 105.1,256.2M105.1,256.2 102.2,258.8M102.2,258.8 101.5,259.5 96.3,265.2M96.3,265.2 89.5,272.5M86.5,260.5 90.8,257.9M90.8,257.9 98.2,253.5M98.2,253.5 106.5,248.5M91.5,265.5 94.8,263.2M94.8,263.2 101.9,258.4M101.9,258.4 105.1,256.2M105.1,256.2 110.5,252.5M90.5,257.5 94.8,263.2M94.8,263.2 96.5,265.5M97.5,252.5 98.2,253.5M98.2,253.5 101.9,258.4M101.9,258.4 102.2,258.8M102.2,258.8 102.2,258.8M102.2,258.8 103.5,260.5M98.5,274.5 101.5,288.5M84.5,288.5 101.5,288.5 125.5,284.5 127.1,284.2M127.1,284.2 144.5,281.5M68.5,294.5 77.5,287.5 84.5,288.5 83.5,296.5 68.5,294.5M83.5,296.5 84.4,302.5M84.4,302.5 85.5,309.5M85.5,309.5 86.4,315.5M86.4,315.5 87.5,322.5M83.5,296.5 101.6,294.2M101.6,294.2 125.2,291.2M125.2,291.2 127.8,290.9M127.8,290.9 146.5,288.5M84.5,302.5 101.9,300.3M101.9,300.3 123.1,297.5M123.1,297.5 128.5,296.8M128.5,296.8 146.5,294.5M85.5,309.5 102.1,307.3M102.1,307.3 120.5,304.9M120.5,304.9 129.3,303.8M129.3,303.8 146.5,301.5M86.5,315.5 102.3,313.4M102.3,313.4 118.4,311.3M118.4,311.3 130,309.7M130,309.7 146.5,307.5M87.5,322.5 102.5,320.7M102.5,320.7 115.6,319.2M115.6,319.2 130.9,317.4M130.9,317.4 146.5,315.5M101.5,288.5 101.7,294.2M101.7,294.2 101.9,300.2M101.9,300.2 102.1,307.3M102.1,307.3 102.3,313.4M102.3,313.4 102.5,321.5M126.5,287.5 125.2,291.2M125.2,291.2 123.1,297.5M123.1,297.5 120.5,304.9M120.5,304.9 118.3,311.2M118.3,311.2 115.5,319.5M125.5,265.5 127.1,284.2M127.1,284.2 127.5,288.5 127.8,290.9M127.8,290.9 128.5,296.8M128.5,296.8 129.3,303.8M129.3,303.8 130,309.7M130,309.7 130.9,317.4M130.9,317.4 131.5,322.5 132.5,327.5 146.5,324.5M142.5,230.5 144.5,257.5 146.5,288.5 147.1,294.4M147.1,294.4 149.5,317.5 151.5,341.5 153.5,350.5M134.5,254.5 142.5,257.5M120.5,218.5 125.5,240.5 126.5,265.5M134.5,215.5 138.5,237.5 139.5,254.5M154.5,254.5 159.5,269.5 163.5,278.5 165.8,274.3M165.8,274.3 168.5,269.5 171.3,263.9M171.3,263.9 172.7,261.1M172.7,261.1 173.5,259.5 179.5,255.5M154.5,254.5 156.5,237.5 165.6,231.1M165.6,231.1 166.5,230.5 173.5,235.5 172.1,237.5M172.1,237.5 168.5,242.5M149.5,288.5 157.5,288.5M157.5,288.5 160.8,288.5M160.8,288.5 163.5,288.5M149.5,292.5 157.9,292.5M157.9,292.5 161.1,292.5M161.1,292.5 163.5,292.5M149.5,295.5 158.2,295.5M158.2,295.5 161.3,295.5M161.3,295.5 163.5,295.5M149.5,299.5 158.7,299.5M158.7,299.5 161.6,299.5M161.6,299.5 163.5,299.5M149.5,302.5 159,303.2M159,303.2 161.9,303.4M161.9,303.4 163.5,303.5M150.5,306.5 156.3,306.5M156.3,306.5 159.4,306.5M159.4,306.5 162.2,306.5M162.2,306.5 163.5,306.5M157.5,288.5 157.9,292.5M157.9,292.5 158.2,295.5M158.2,295.5 158.7,299.5M158.7,299.5 159,303.2M159,303.2 159.4,306.5M159.4,306.5 159.5,307.5M163.5,278.5 164.6,288.5M164.6,288.5 164.7,289.3M164.7,289.3 165.9,299.8M165.9,299.8 166.1,302.2M166.1,302.2 166.5,305.5 168.5,350.5M156.5,307.5 160.5,329.5 161.5,350.5M2.5,304.5 12.5,310.5 21.5,317.5 26.5,324.5 28.5,334.5 31.5,350.5M21.5,315.5 28.5,316.5 38.5,327.5 42.5,339.5 45.5,343.5M4.5,341.5 14.5,343.5 24.5,348.5M61.5,315.5 68.5,315.5 69.5,329.5 71.8,333.2M71.8,333.2 71.8,333.4M71.8,333.4 72.5,334.5M61.5,315.5 62.5,331.5 56.5,335.5 51.5,339.5 48.5,329.5M62.5,331.5 72.5,333.5 81.5,336.5 86.5,331.5M119.5,333.5 120.5,343.5 119.5,350.5M126.5,333.5 127.5,350.5M134.5,334.5 135.5,350.5M142.5,334.5 142.5,350.5M101.5,350.5 103.5,345.5 109.5,342.5 115.5,343.5M79.5,209.5 80.9,213.6M80.9,213.6 83.5,221.5M91.5,209.5 92,211.4M92,211.4 95.5,223.5M103.5,209.5 106.5,222.5M113.5,209.5 116.8,216.1M116.8,216.1 118.5,219.5 120.5,218.5M146.5,209.5 150.5,228.5M156.5,209.5 158.4,217.3M158.4,217.3 160.1,224M160.1,224 160.5,225.5 162,226.8M162,226.8 162.6,227.3M162.6,227.3 166.5,230.5M168.5,209.5 169.7,215.2M169.7,215.2 171.5,223.5 177.2,227.6M177.2,227.6 178.5,228.5M134.5,215.5 133.7,210.7M133.7,210.7 133.7,210.6M133.7,210.6 133.5,209.5M81.5,213.5 92,211.4M92,211.4 96.5,210.5 103.6,210M103.6,210 110.5,209.5M115.5,216.5 116.8,216.1M116.8,216.1 134.5,210.5 144.5,209.5M151.5,218.5 158.4,217.3M158.4,217.3 168.5,215.5 169.7,215.2M169.7,215.2 174.4,213.9M174.4,213.9 179.5,212.5M159.5,227.5 162,226.8M162,226.8 162.2,226.7M162.2,226.7 170,224.3M170,224.3 171.6,223.9M171.6,223.9 171.9,223.8M171.9,223.8 178.2,221.9M178.2,221.9 179.5,221.5M139.5,233.5 140.5,254.5M144.5,233.5 146.5,254.5M149.5,235.5 151.5,254.5M175.5,237.5 193.5,245.5 214.5,251.5 242.5,267.5 243.5,267.8M243.5,267.8 263.5,273.5 294.5,281.5 301.5,282.6M301.5,282.6 306.8,283.3M306.8,283.3 314.5,284.5 325.5,284.9M325.5,284.9 325.6,284.9M325.6,284.9 339.5,285.5M167.5,258.5 172.7,261.1M172.7,261.1 224.5,286.5 237.5,287.5M232.5,199.5 232.9,206.8M232.9,206.8 233.1,211.8M233.1,211.8 233.5,219.5 232.5,240.5 245.5,246.5 250.5,219.5 251.5,199.5M245.5,246.5 243.5,267.5 242.5,276.5 237.5,287.5 233.5,292.1M233.5,292.1 224.5,302.5 221.2,307M221.2,307 211.5,320.5 209.2,324.6M209.2,324.6 208.6,325.6M208.6,325.6 207.3,328M207.3,328 207.2,328.2M207.2,328.2 198.5,343.5 196.5,350.5M245.5,246.5 265.5,257.5 264.5,268.5 263.5,273.5M265.5,257.5 273.5,250.5 274.5,247.5M274.5,247.5 277.5,238.5 276.2,237.4M276.2,237.4 270.5,232.5 266.3,230.7M266.3,230.7 263.5,229.5M277.5,238.5 279.8,235M279.8,235 285.8,225.6M285.8,225.6 286.5,224.5 286.6,223.3M286.6,223.3 287.1,215.6M287.1,215.6 287.5,209.5 283.5,199.5M251.5,219.5 263.5,217.5 270.5,210.5 281.5,208.5 287.5,209.5M265.5,199.5 268.3,205.6M268.3,205.6 270.5,210.5M267.5,232.5 265.5,234.5 263.5,235.5 261.5,234.5 260.5,232.5 261.5,229.5 262.4,229M262.4,229 263.5,228.5 265.5,229.5 266.3,230.7M266.3,230.7 267.5,232.5M215.5,236.5 214.5,251.5M193.5,245.5 215.5,236.5 232.5,240.5M193.5,245.5 188.5,266.5M203.5,229.5 201.5,236.5M175.5,237.5 177.2,227.6M177.2,227.6 178.2,221.9M178.2,221.9 179.5,214.5 185.5,206.5 187,205.7M187,205.7 192.2,202.9M192.2,202.9 198.5,199.5M160.5,224.5 162.2,226.7M162.2,226.7 162.6,227.3M162.6,227.3 165.6,231.1M165.6,231.1 170.5,237.5 172.1,237.5M172.1,237.5 175.5,237.5M160.5,206.5 171.5,204.5 174.4,213.9M174.4,213.9 175.5,217.5 171.3,222.7M171.3,222.7 171,223.1M171,223.1 170,224.3M170,224.3 167.5,227.5M178.5,202.5 176.5,204.5 174.5,204.5 172.5,202.5 174.5,200.5 176.5,200.5 178.5,202.5M165.5,260.5 165.8,274.3M165.8,274.3 166.2,289.6M166.2,289.6 166.4,300.3M166.4,300.3 166.5,302.5 185.5,317.5M170.5,263.5 211.5,284.5M169.5,271.5 183.5,278.9M183.5,278.9 192.8,283.8M192.8,283.8 198.4,286.8M198.4,286.8 203.5,289.5M171.5,276.5 175.9,279.9M175.9,279.9 183.9,286M183.9,286 190.4,291M190.4,291 195.8,295.1M195.8,295.1 201.5,299.5M165.5,289.5 177.5,292.1M177.5,292.1 184.4,293.6M184.4,293.6 188.5,294.5M165.5,299.5 166.4,300.3M166.4,300.3 190.5,320.5M175.5,276.5 175.9,279.9M175.9,279.9 177.5,292.1M177.5,292.1 179.5,307.5M183.5,278.5 183.9,286M183.9,286 184.4,293.6M184.4,293.6 185.2,307.3M185.2,307.3 185.5,312.5M193.5,281.5 192.8,283.8M192.8,283.8 190.4,291M190.4,291 189.3,294.7M189.3,294.7 185.2,307.3M185.2,307.3 184.5,309.5M198.5,286.5 195.8,295.1M195.8,295.1 193.5,302.5M224.5,286.5 229.9,289.8M229.9,289.8 233.5,292.1M233.5,292.1 237.5,294.5 242.5,298.5M229.5,290.5 221.2,307M221.2,307 218.5,312.5 209.2,324.6M209.2,324.6 208.5,325.5 207.2,328M207.2,328 207.2,328.2M207.2,328.2 198.5,345.5M214.5,296.5 211.5,304.5 202.5,317.5M218.5,312.5 229.5,309.5 237.5,320.5M208.5,325.5 221.5,333.5 230.5,341.8M230.5,341.8 234.5,345.5M206.5,327.5 215.5,333.5 208.5,348.5M221.5,333.5 227.5,330.5 234.5,335.5 230.5,341.8M230.5,341.8 229.5,343.5M175.5,333.5 178.5,343.5 179.5,350.5M160.5,284.5 160.8,288.5M160.8,288.5 161.1,292.5M161.1,292.5 161.3,295.5M161.3,295.5 161.6,299.5M161.6,299.5 161.9,303.4M161.9,303.4 162.2,306.5M162.2,306.5 165.5,350.5M294.5,281.5 295.2,274.8M295.2,274.8 295.5,271.5 300.9,269.1M300.9,269.1 302.4,268.4M302.4,268.4 304.5,267.5 310.1,267.9M310.1,267.9 317.5,268.5 319.2,268.2M319.2,268.2 327.5,266.5 339.5,260.5M327.5,266.5 328.3,259.1M328.3,259.1 328.4,258.7M328.4,258.7 328.5,257.5 330.9,255.4M330.9,255.4 339.5,247.5M294.5,281.5 294.5,282.6M294.5,282.6 294.5,286.5M294.5,286.5 294.5,302.5 295.6,312.4M295.6,312.4 296.5,320.5 298.4,327.4M298.4,327.4 301.5,338.5 304.5,348.5M301.5,282.5 306.5,302.5 312.5,320.5 316.5,332.5M316.5,332.5 317.5,335.5 322.5,348.5M282.5,289.5 294.5,286.5M267.5,300.5 268.7,300.8M268.7,300.8 274.5,302.5 273.8,309.4M273.8,309.4 273.7,310.2M273.7,310.2 273.5,312.5 276.5,327.5 281.5,343.5 278.5,348.5M273.5,311.5 283.5,313.5 293.4,312.6M293.4,312.6 294.5,312.5M291.5,326.5 292.6,326.6M292.6,326.6 296.6,327.1M296.6,327.1 296.8,327.2M296.8,327.2 298.4,327.4M298.4,327.4 299.5,327.5M323.5,294.5 325.5,294.5M325.5,294.5 335.5,294.5M335.5,294.5 339.5,294.5M325.5,285.5 325.6,284.4M325.6,284.4 326.5,276.5 339.5,275.5M325.5,294.5 325.5,307.5M323.5,312.5 335.5,313.2M335.5,313.2 339.5,313.5M323.5,318.5 339.5,318.5M335.5,294.5 335.5,312.5M30.5,99.5 35.5,103.1M35.5,103.1 49.8,113.5M49.8,113.5 51.3,114.7M51.3,114.7 52.5,115.5 61.4,121.7M61.4,121.7 68.7,126.7M68.7,126.7 73.8,130.2M73.8,130.2 81.5,135.5 85.5,137.5M85.5,137.5 89.6,139.6M89.6,139.6 99.5,144.5M38.5,99.5 39.7,100.5M39.7,100.5 53,110.8M53,110.8 54,111.7M54,111.7 54.2,111.8M54.2,111.8 61.5,117.5 62.9,118.7M62.9,118.7 75.9,129.5M75.9,129.5 85.5,137.5M43.5,99.5 53.5,106.2M53.5,106.2 61.5,111.5M61.5,111.5 65.2,114M65.2,114 67.5,115.5 80.8,127.8M80.8,127.8 86.6,133.1M86.6,133.1 86.9,133.4M86.9,133.4 93.5,139.5M54.5,109.5 53,110.8M53,110.8 52.8,111M52.8,111 49.8,113.5M49.8,113.5 49.1,114.1M49.1,114.1 44.7,117.9M44.7,117.9 43.3,119.1M43.3,119.1 40.5,121.5M67.5,109.5 66.2,112.1M66.2,112.1 65.2,114M65.2,114 63.7,117.2M63.7,117.2 62.9,118.7M62.9,118.7 61.4,121.7M61.4,121.7 60.6,123.3M60.6,123.3 57.5,129.5 55.9,132.7M55.9,132.7 54.5,135.5 56.2,135.1M56.2,135.1 67.5,132.5M81.5,127.5 75.9,129.5M75.9,129.5 73.9,130.2M73.9,130.2 71.2,131.2M71.2,131.2 67.5,132.5M40.5,121.5 27.8,124M27.8,124 27.2,124.2M27.2,124.2 20.5,125.5 16.5,135.5 12.5,139.5M12.5,139.5 10.5,141.5 8.6,140.8M8.6,140.8 2.5,138.5M2.5,117.5 5.4,117.1M5.4,117.1 10.5,116.5 20.5,121.5 24.9,123.3M24.9,123.3 26.2,123.8M26.2,123.8 27.2,124.2M27.2,124.2 30.5,125.5 34.2,125.1M34.2,125.1 37.8,124.8M37.8,124.8 40.5,124.5M2.5,107.5 8.9,102.7M8.9,102.7 10.5,101.5 14.5,99.5M71.5,99.5 73.4,101M73.4,101 81.5,107.5 81.7,108.5M81.7,108.5 81.7,108.7M81.7,108.7 82,110.5M82,110.5 83.5,119.5 84.7,122M84.7,122 89.5,131.5 99.5,144.5M81.5,107.5 94.7,109.5M94.7,109.5 101.5,110.5 105.8,110.3M105.8,110.3 122.5,109.5 130.5,107.5 131.8,105.8M131.8,105.8 136.5,99.5M2.5,149.5 4.7,149.1M4.7,149.1 24.5,145.5 37.5,144.5M37.5,144.5 50.5,143.5 57.4,144.2M57.4,144.2 57.4,144.2M57.4,144.2 60.8,144.5M60.8,144.5 81.5,146.5 97.5,147.5M4.5,164.5 12.5,163.5 8.5,174.5M10.5,186.5 20.5,182.5M6.5,198.5 10.5,213.5 9.3,214.9M9.3,214.9 6.5,218.5M4.5,209.5 9.3,214.9M9.3,214.9 12.5,218.5" stroke="#101010" stroke-width="1.15" stroke-dasharray="5.8 8.2" stroke-dashoffset="7.5"/><path d="M108.5,113.9L111.4,112.9M138.5,115.5L141.5,114.5M145.2,113.2L148.1,112.3M151.8,111.0L154.7,110.0M21.9,163.9L24.8,163.0M35.2,159.5L38.1,158.5M55.1,152.8L58.0,151.9M121.5,130.6L124.4,129.6M128.1,128.4L131.0,127.4M161.3,117.3L164.2,116.3M38.4,169.1L41.3,168.1M45.0,166.9L47.9,165.9M58.3,162.4L61.2,161.5M71.6,158.0L74.5,157.0M78.2,155.8L81.1,154.8M91.5,151.3L94.4,150.4M111.4,144.7L114.3,143.7M138.0,135.8L140.9,134.8M164.5,126.9L167.4,125.9M171.1,124.7L174.1,123.7M61.7,172.8L64.7,171.8M68.4,170.5L71.3,169.6M88.3,163.9L91.2,162.9M108.2,157.2L111.1,156.2M128.1,150.5L131.1,149.6M134.8,148.3L137.7,147.4M148.0,143.9L151.0,142.9M161.3,139.4L164.2,138.5M168.0,137.2L170.9,136.2M111.3,166.5L114.2,165.5M157.8,151.0L160.7,150.0M41.4,200.2L44.3,199.2M48.0,198.0L51.0,197.0M54.7,195.7L57.6,194.8M68.0,191.3L70.9,190.3M94.5,182.4L97.4,181.4M101.1,180.2L104.1,179.2M107.8,178.0L110.7,177.0M121.1,173.5L124.0,172.6M127.7,171.3L130.6,170.3M154.2,162.4L157.2,161.5M174.2,155.8L177.1,154.8M180.8,153.5L183.7,152.6M194.1,149.1L197.0,148.1M44.5,209.6L47.5,208.6M91.0,194.0L93.9,193.0M97.6,191.8L100.6,190.8M117.6,185.1L120.5,184.2M124.2,182.9L127.1,181.9M137.5,178.5L140.4,177.5M183.9,162.9L186.9,161.9M203.9,156.3L206.8,155.3M87.5,205.6L90.4,204.6M100.8,201.1L103.7,200.2M107.4,198.9L110.3,197.9M120.7,194.5L123.6,193.5M147.2,185.6L150.2,184.6M207.0,165.6L209.9,164.6M57.6,226.6L60.5,225.6M64.3,224.4L67.2,223.4M90.8,215.5L93.7,214.5M117.4,206.6L120.3,205.6M124.0,204.4L126.9,203.4M137.3,200.0L140.2,199.0M150.6,195.5L153.5,194.5M170.5,188.9L173.4,187.9M177.1,186.6L180.0,185.7M190.4,182.2L193.3,181.2M210.3,175.5L213.2,174.6M100.6,222.8L103.6,221.8M107.3,220.6L110.2,219.6M113.9,218.4L116.8,217.4M127.2,213.9L130.1,212.9M153.7,205.0L156.7,204.0M167.0,200.6L169.9,199.6M216.6,194.2L219.5,193.2M20.3,156.1L21.7,160.2M33.4,172.8L34.8,177.0M36.5,182.3L37.9,186.4M42.9,201.2L44.3,205.4M52.4,229.7L53.8,233.9M43.0,180.1L44.4,184.3M55.7,218.0L57.1,222.2M58.9,227.5L60.3,231.7M46.8,168.3L48.2,172.5M53.2,187.2L54.6,191.4M59.5,206.2L60.9,210.4M62.7,215.7L64.1,219.9M47.4,147.0L48.8,151.2M56.9,175.5L58.3,179.6M63.2,194.4L64.6,198.6M69.6,213.4L71.0,217.6M72.7,222.9L74.1,227.1M54.2,144.7L55.6,148.9M57.4,154.2L58.8,158.4M60.5,163.7L61.9,167.9M66.9,182.7L68.3,186.8M70.1,192.1L71.5,196.3M73.2,201.6L74.6,205.8M76.4,211.1L77.8,215.3M79.6,220.6L81.0,224.8M79.8,199.4L81.2,203.6M83.0,208.9L84.4,213.1M86.2,218.4L87.6,222.6M73.1,159.5L74.5,163.7M85.8,197.4L87.2,201.6M92.2,216.4L93.6,220.6M80.1,157.2L81.5,161.3M89.6,185.6L91.0,189.8M92.8,195.1L94.2,199.3M105.4,212.0L106.8,216.1M108.6,221.4L110.0,225.6M96.7,162.1L98.1,166.3M99.9,171.6L101.3,175.8M103.0,181.1L104.4,185.3M106.2,190.6L107.6,194.8M109.4,200.1L110.8,204.3M103.1,160.0L104.5,164.2M106.3,169.5L107.7,173.7M122.2,216.9L123.6,221.1M106.1,148.4L107.5,152.6M109.3,157.9L110.7,162.1M112.5,167.4L113.9,171.6M113.2,146.1L114.6,150.3M120.3,143.7L121.7,147.9M129.8,172.2L131.2,176.3M136.1,191.1L137.5,195.3M126.5,141.6L127.9,145.8M132.8,160.6L134.2,164.8M139.2,179.6L140.6,183.7M123.8,110.9L125.2,115.1M130.1,129.9L131.5,134.0M139.6,158.3L141.0,162.5M149.1,186.8L150.5,190.9M155.5,205.7L156.9,209.9M140.3,137.0L141.7,141.2M143.5,146.5L144.9,150.7M139.7,116.1L141.1,120.3M142.9,125.6L144.3,129.8M149.2,144.6L150.6,148.7M155.6,163.5L157.0,167.7M158.8,173.0L160.2,177.2M147.1,113.6L148.5,117.8M156.6,142.1L158.0,146.3M166.2,170.5L167.5,174.7M172.5,189.5L173.9,193.7M175.7,199.0L177.1,203.2M156.8,120.9L158.2,125.1M163.2,139.9L164.6,144.1M166.3,149.4L167.7,153.6M175.9,177.8L177.3,182.0M159.8,109.4L161.2,113.6M163.0,118.9L164.4,123.0M188.9,173.5L190.3,177.7M196.0,171.1L197.4,175.3M199.2,180.6L200.6,184.7M202.4,190.1L203.8,194.2M196.1,150.0L197.5,154.2M199.2,159.5L200.6,163.6M205.6,178.4L207.0,182.6M206.1,157.2L207.5,161.4M175.5,270.7L177.9,271.9M186.2,276.2L188.6,277.4M178.2,278.7L180.6,279.9M167.6,286.4L169.9,287.6M165.1,291.1L167.5,292.3M181.2,299.3L183.5,300.5M186.5,302.0L188.9,303.2M191.9,304.8L194.2,305.9M172.6,302.9L175.0,304.1M183.3,308.3L185.7,309.5M188.7,311.1L191.0,312.3M186.3,315.7L188.7,316.9M169.7,268.2L168.5,270.5M174.3,270.5L173.1,272.9M180.0,273.4L178.8,275.8M171.8,289.5L170.6,291.8M185.6,289.7L184.4,292.1M190.5,305.7L189.3,308.1M195.4,308.2L194.2,310.6M219.9,299.0L221.6,296.4M223.9,293.2L225.6,290.7M210.0,326.2L211.7,323.7M215.9,330.3L217.6,327.8M219.9,324.6L221.6,322.1M206.0,342.4L208.7,344.3M210.1,336.6L212.8,338.5M216.3,340.9L219.0,342.8M220.3,309.0L223.0,310.9M230.4,307.6L233.1,309.5M222.4,292.9L225.1,294.8M234.7,301.5L237.4,303.4" stroke="#101010" stroke-width="1.15"/></g></svg>
<svg style="left:475px;top:190px" width="52" height="12"><rect x="0.6" y="6.6" width="11.5" height="3.8" fill="#ffffff" stroke="#6e6e6e" stroke-width="1.1"/><rect x="23" y="0.6" width="9.5" height="8" fill="#ffffff" stroke="#6e6e6e" stroke-width="1.1"/><rect x="20.3" y="2.8" width="9.5" height="8" fill="#ffffff" stroke="#6e6e6e" stroke-width="1.1"/><rect x="23" y="5.2" width="4" height="3.4" fill="#d8d8d8" stroke="#6e6e6e" stroke-width="0.9"/><path d="M41.5,2 L50,9.5 M50,2 L41.5,9.5" stroke="#6e6e6e" stroke-width="4"/><path d="M41.5,2 L50,9.5 M50,2 L41.5,9.5" stroke="#ffffff" stroke-width="2.1"/></svg>
<svg style="left:0px;top:450px" width="90" height="82"><path d="M14.5,21.5 V70.5 H64.5" fill="none" stroke="#111" stroke-width="1.1"/><rect x="10.5" y="65.5" width="9" height="9" fill="none" stroke="#111" stroke-width="1.1"/><path d="M16,5 L22.5,11.5 L29,5 M22.5,11.5 V17" fill="none" stroke="#111" stroke-width="1.1"/><path d="M69,57 L81.5,68.7 M81.5,57 L69,68.7" stroke="#111" stroke-width="1.1"/></svg>
<svg style="left:340px;top:476px" width="100" height="56"><path d="M51.5,1 V55 M2.7,48.2 H99" stroke="#ffffff" stroke-width="1.1"/><rect x="47.5" y="44.8" width="7.5" height="7" fill="none" stroke="#ffffff" stroke-width="1.1"/></svg>
<svg style="left:0px;top:155px" width="160" height="22"><path d="M8,22 C20,22 18,0 32,0 H132 C146,0 144,22 156,22 Z" fill="#2d3541"/></svg>
<svg style="left:130px;top:155px" width="160" height="22"><path d="M6,22 C18,22 14,0 26,0 H128 C140,0 136,22 148,22 Z" fill="#3b4453"/></svg>
<div class="t" style="left:32.5px;top:159px;font-size:12px;color:#c8ccd2;letter-spacing:-0.104px;">Début</div>
<div class="t" style="left:155.5px;top:159px;font-size:12px;font-weight:bold;color:#ffffff;letter-spacing:0.193px;">MyMap*</div>
<svg style="left:246.5px;top:162.3px" width="9" height="8"><path d="M0.5,0.3 L8.5,7.7 M8.5,0.3 L0.5,7.7" stroke="#c0c4ca" stroke-width="1.7"/></svg>
<svg style="left:275px;top:160px" width="22" height="13"><path d="M0,0 H16 C20,0 22,4 22,9 V13 H10 C3,13 4,0 0,0 Z" fill="#2d3541"/></svg>
<svg style="left:281px;top:162.5px" width="9" height="9"><path d="M4.5,0.5 V8.5 M0.5,4.5 H8.5" stroke="#c8ccd2" stroke-width="1.8"/></svg>
<svg style="left:190.5px;top:532px" width="95.5" height="19.5"><path d="M0,0 H95.5 L91.0,16 Q90.0,19.5 86.5,19.5 H9 Q5.5,19.5 4.5,16 Z" fill="#2d3541"/></svg>
<svg style="left:99.5px;top:532px" width="90.5" height="19.5"><path d="M0,0 H90.5 L86.0,16 Q85.0,19.5 81.5,19.5 H9 Q5.5,19.5 4.5,16 Z" fill="#2d3541"/></svg>
<svg style="left:43px;top:532px" width="55" height="19.5"><path d="M0,0 H55 L50.5,16 Q49.5,19.5 46,19.5 H9 Q5.5,19.5 4.5,16 Z" fill="#3b4453"/></svg>
<div class="t" style="left:53.5px;top:534px;font-size:12px;font-weight:bold;color:#ffffff;letter-spacing:0.266px;">Objet</div>
<div class="t" style="left:108px;top:534px;font-size:12px;color:#c8ccd2;letter-spacing:-0.235px;">Présentation1</div>
<div class="t" style="left:203px;top:534px;font-size:12px;color:#c8ccd2;letter-spacing:-0.158px;">Présentation2</div>
<svg style="left:289px;top:535px" width="22" height="14"><path d="M0,0 H22 L19,11 Q18,14 15,14 H7 Q4,14 3,11 Z" fill="#2d3541"/></svg>
<svg style="left:297px;top:538px" width="8" height="8"><path d="M4,0.3 V7.7 M0.3,4 H7.7" stroke="#c8ccd2" stroke-width="1.6"/></svg>
<div class="a" style="left:566.0px;top:188.5px;width:1.2px;height:1.2px;background:#c8ccd2;"></div>
<div class="a" style="left:568.5px;top:188.5px;width:1.2px;height:1.2px;background:#c8ccd2;"></div>
<div class="a" style="left:566.0px;top:190.5px;width:1.2px;height:1.2px;background:#c8ccd2;"></div>
<div class="a" style="left:568.5px;top:190.5px;width:1.2px;height:1.2px;background:#c8ccd2;"></div>
<div class="a" style="left:566.0px;top:192.5px;width:1.2px;height:1.2px;background:#c8ccd2;"></div>
<div class="a" style="left:568.5px;top:192.5px;width:1.2px;height:1.2px;background:#c8ccd2;"></div>
<div class="a" style="left:566.0px;top:194.5px;width:1.2px;height:1.2px;background:#c8ccd2;"></div>
<div class="a" style="left:568.5px;top:194.5px;width:1.2px;height:1.2px;background:#c8ccd2;"></div>
<div class="a" style="left:566.0px;top:196.5px;width:1.2px;height:1.2px;background:#c8ccd2;"></div>
<div class="a" style="left:568.5px;top:196.5px;width:1.2px;height:1.2px;background:#c8ccd2;"></div>
<div class="t" style="left:575px;top:184px;color:#e8e8e8;transform-origin:0 50%;transform:scaleX(0.909);letter-spacing:-0.35px">VOLET TÂCHES</div>
<svg style="left:539px;top:204.5px" width="21.5" height="76.5"><path d="M21.5,0.5 H5 Q0.5,0.5 0.5,5 V71.5 Q0.5,76.0 5,76.0 H21.5" fill="#3b4453" stroke="#262d38" stroke-width="1"/></svg>
<div class="t" style="left:519.7px;top:234.75px;width:64px;transform:rotate(-90deg);transform-origin:50% 50%;letter-spacing:-0.259px;color:#f0f0f0">Gestionnai...</div>
<svg style="left:539.5px;top:282px" width="20.5" height="75"><path d="M20.5,0 H5 Q0,0 0,5 V70 Q0,75 5,75 H20.5 Z" fill="#2d3541"/></svg>
<div class="t" style="left:519.7px;top:311.5px;width:64px;transform:rotate(-90deg);transform-origin:50% 50%;letter-spacing:-0.259px;color:#d0d4da">Explorateu...</div>
<svg style="left:539.5px;top:358px" width="20.5" height="75"><path d="M20.5,0 H5 Q0,0 0,5 V70 Q0,75 5,75 H20.5 Z" fill="#2d3541"/></svg>
<div class="t" style="left:538.7px;top:387.5px;width:26px;transform:rotate(-90deg);transform-origin:50% 50%;letter-spacing:-0.136px;color:#d0d4da">Atlas</div>
<svg style="left:539.5px;top:434px" width="20.5" height="75.5"><path d="M20.5,0 H5 Q0,0 0,5 V70.5 Q0,75.5 5,75.5 H20.5 Z" fill="#2d3541"/></svg>
<div class="t" style="left:518.7px;top:463.75px;width:66px;transform:rotate(-90deg);transform-origin:50% 50%;letter-spacing:-0.005px;color:#d0d4da">Topographie</div>
<div class="a" style="left:560px;top:203px;width:1px;height:2px;background:#262d38;"></div>
<div class="a" style="left:560.5px;top:529.5px;width:331px;height:1px;background:#2a313d;"></div>
<div class="a" style="left:891px;top:204px;width:1px;height:326px;background:#2a313d;"></div>
<div class="t" style="left:573px;top:212px;font-size:12px;color:#e8e8e8;letter-spacing:-0.446px;">Carte:</div>
<div class="a" style="left:611.5px;top:210.5px;width:268px;height:19px;background:#4a566b;border:1px solid #2a313d"></div>
<div class="t" style="left:615.5px;top:212px;font-size:12px;color:#f0f0f0;letter-spacing:-0.137px;">Par défaut</div>
<svg style="left:868.25px;top:218.9px" width="7.5" height="4.2"><polygon points="0,0 7.5,0 3.75,4.2" fill="#e0e0e0"/></svg>
<div class="a" style="left:571px;top:239px;width:310px;height:54.5px;background:transparent;border:1px solid #2c3440"></div>
<svg style="left:588px;top:249.5px" width="21.5" height="23.5"><path d="M0,4.5 V19 A10.7,4.5 0 0 0 21.4,19 V4.5 Z" fill="#d4d4d4"/><ellipse cx="10.7" cy="4.5" rx="10.7" ry="4.5" fill="#e6e6e6"/><path d="M0,11 A10.7,4.5 0 0 0 21.4,11" fill="none" stroke="#7a7f88" stroke-width="1.1"/><path d="M0,4.8 A10.7,4.5 0 0 0 21.4,4.8" fill="none" stroke="#9a9ea6" stroke-width="0.9"/></svg>
<div class="t" style="left:578.5px;top:274px;font-size:12px;color:#e8e8e8;letter-spacing:-0.790px;">Données</div>
<svg style="left:629.5px;top:252.5px" width="22" height="18"><path d="M12.5,8.5 L20.5,1" stroke="#c8c8c8" stroke-width="1.6" stroke-linecap="round"/><path d="M0.3,17.5 C2,12 7,8 11.5,8 C13.5,9 14,11 13.2,12.5 C10,16.5 5,17.5 0.3,17.5 Z" fill="#d8a46c"/></svg>
<div class="t" style="left:629px;top:274px;font-size:12px;color:#e8e8e8;letter-spacing:-0.736px;">Style</div>
<svg style="left:661px;top:250.3px" width="22.5" height="22.5"><rect x="0.6" y="0.6" width="21.3" height="21.3" fill="none" stroke="#c8c8c8" stroke-width="1.2"/><path d="M0.6,4.5 H22 M0.6,9 H22 M0.6,13.4 H22 M0.6,17.8 H22 M6,0.6 V22 M11.3,0.6 V22 M16.6,0.6 V22" stroke="#9ea2aa" stroke-width="0.9"/></svg>
<div class="t" style="left:660px;top:274px;font-size:12px;color:#e8e8e8;letter-spacing:-0.537px;">Table</div>
<svg style="left:695px;top:250px" width="24" height="23"><path d="M5.5,21.5 L17,8" stroke="#e09a62" stroke-width="3" stroke-linecap="round"/><path d="M11,3 L19.5,1 L23.5,6 L21,6.5 L18.5,9.5 L14.5,6.5 Z" fill="#d4d4d4"/><path d="M4,4.5 L18.5,19.5" stroke="#d4d4d4" stroke-width="3"/><path d="M1,0.5 C-0.5,3 0.5,6 3.5,7 L6.5,4.5 L4.5,1.5 Z M1,0.5 L3.2,3.6 L5.6,1.8 Z" fill="#d4d4d4"/><path d="M22.3,22 C24,19.5 23,16.5 20,15.5 L17,18 L19,21 Z" fill="#d4d4d4"/><circle cx="2.6" cy="2.8" r="1.6" fill="#3b4453"/><circle cx="20.6" cy="20" r="1.6" fill="#3b4453"/></svg>
<div class="t" style="left:693.7px;top:274px;font-size:12px;color:#e8e8e8;letter-spacing:-0.446px;">Outils</div>
<svg style="left:734px;top:248.5px" width="20" height="24"><path d="M0,0 H13 L20,7 V24 H0 Z" fill="#f2f2ee"/><path d="M0,12.5 C4,16 9,15 10.5,12 L11,24 H0 Z" fill="#cfe4f6"/><path d="M10.5,12 C13,10 17,10 20,10.5 V24 H11 Z" fill="#d4f0c8"/><path d="M0,12.5 C4,16 9,15 10.5,12 C13,10 17,10 20,10.5 M10.5,12 C9.5,16 10.5,20 11,24" fill="none" stroke="#d86060" stroke-width="0.9"/><path d="M13,0 V7 H20 Z" fill="#dcdcd8"/></svg>
<div class="t" style="left:729.5px;top:274px;font-size:12px;color:#e8e8e8;letter-spacing:-0.807px;">Cartes</div>
<div class="a" style="left:571.5px;top:304.5px;width:68px;height:27px;background:#222933;"></div>
<svg style="left:573px;top:311px" width="16" height="16"><path d="M3,0.5 H0.5 V15.5 H3 M13,0.5 H15.5 V15.5 H13" fill="none" stroke="#d8d8d8" stroke-width="1"/><path d="M5.5,3 H13.5 L10.5,7 H2.5 Z M5.5,6 H13.5 L10.5,10 H2.5 Z M5.5,9 H13.5 L10.5,13 H2.5 Z" fill="#d0d0d0" stroke="#50586a" stroke-width="0.7"/></svg>
<div class="t" style="left:595.5px;top:311px;font-size:12px;color:#f0f0f0;letter-spacing:-0.718px;">Groupes</div>
<div class="a" style="left:648px;top:306px;width:1px;height:25px;background:#5a6272;"></div>
<svg style="left:658.5px;top:312px" width="17" height="16"><path d="M5,0.5 H13 L11,2.7 H3 Z M4,3.8 H12 L10,6 H2 Z M3,7.2 H8 L7,9.4 H1 Z M2.5,10.6 H7 L6,12.8 H0.5 Z" fill="#c4c4c4"/><rect x="7.8" y="6.5" width="8.5" height="9.3" fill="#f2f2f2"/><rect x="7.8" y="6.5" width="8.5" height="1.8" fill="#9a9a9a"/><path d="M14.5,12 H11" stroke="#3b82d0" stroke-width="1.3"/><polygon points="9.2,12 11.5,10.2 11.5,13.8" fill="#3b82d0"/></svg>
<div class="t" style="left:680.5px;top:311px;font-size:12px;color:#e8e8e8;letter-spacing:-0.491px;">Ordre de tracé</div>
<div class="a" style="left:571px;top:339px;width:310.5px;height:178px;background:transparent;border:1px solid #7a818d"></div>
<div class="a" style="left:575.5px;top:344px;width:301px;height:167.5px;background:#f5f5f5;"></div>
<div class="a" style="left:575.5px;top:344px;width:301px;height:28.5px;background:#0078d7;"></div>
<svg style="left:609.3px;top:351.2px" width="13.5" height="13.5"><rect x="0.6" y="0.6" width="12.3" height="12.3" rx="1.5" fill="#ffffff" stroke="#5a5a5a" stroke-width="1.1"/><path d="M3,6.5 L5.5,9.2 L10,3.8" fill="none" stroke="#555" stroke-width="1.5"/></svg>
<svg style="left:642px;top:355px" width="53" height="3"><path d="M0,1.5 H53" stroke="#e6e65a" stroke-width="1.1"/><path d="M13,1.5 H26 M39,1.5 H51" stroke="#101010" stroke-width="1.1"/></svg>
<div class="t" style="left:704.5px;top:349px;font-size:12px;color:#ffffff;letter-spacing:-0.637px;">Roads</div>
<svg style="left:587px;top:382px" width="13" height="9"><path d="M1,1.2 L6.5,7 L12,1.2" fill="none" stroke="#5a5a5a" stroke-width="2.4"/></svg>
<svg style="left:609.3px;top:380.3px" width="13.5" height="13.5"><rect x="0.6" y="0.6" width="12.3" height="12.3" rx="1.5" fill="#ffffff" stroke="#5a5a5a" stroke-width="1.1"/><path d="M3,6.5 L5.5,9.2 L10,3.8" fill="none" stroke="#555" stroke-width="1.5"/></svg>
<div class="a" style="left:628px;top:378.5px;width:48px;height:16px;background:#ffffff;"></div>
<div class="t" style="left:687px;top:379.5px;font-size:12px;font-style:italic;color:#1a1a1a;letter-spacing:-0.232px;">Base de la carte</div>
<svg style="left:631px;top:407.3px" width="13.5" height="13.5"><rect x="0.6" y="0.6" width="12.3" height="12.3" rx="1.5" fill="#ffffff" stroke="#5a5a5a" stroke-width="1.1"/></svg>
<div class="a" style="left:650.5px;top:405.5px;width:48px;height:16px;background:#ffffff;"></div>
<div class="a" style="left:653px;top:413px;width:42px;height:1px;background:#e0e0e0;"></div>
<div class="t" style="left:709.5px;top:405.5px;font-size:12px;color:#1a1a1a;letter-spacing:-0.137px;">Par défaut</div>
<div class="a" style="left:864px;top:536px;width:26px;height:22.5px;background:#5b8ac6;"></div>
<svg style="left:868px;top:541px" width="18" height="13"><path d="M0,3.5 H8" stroke="#fff" stroke-width="2"/><polygon points="6.5,0 11.5,3.5 6.5,7" fill="#fff"/><path d="M18,9 H10" stroke="#fff" stroke-width="2"/><polygon points="11.5,5.5 6.5,9 11.5,12.5" fill="#fff"/></svg>
<div class="a" style="left:50.5px;top:563px;width:47.0px;height:23.5px;background:#3b4453;"></div>
<div class="a" style="left:50.5px;top:563px;width:22.5px;height:23.5px;background:#4c6d99;"></div>
<svg style="left:54.5px;top:567.5px" width="15" height="15"><path d="M2.5,1 V12.5 H14" fill="none" stroke="#c8d4e4" stroke-width="1.1"/><polygon points="1,3 2.5,0 4,3" fill="#c8d4e4"/><polygon points="12.5,11 15.3,12.5 12.5,14" fill="#c8d4e4"/><rect x="1.4" y="11.4" width="2.2" height="2.2" fill="#e8eef8"/></svg>
<svg style="left:78px;top:567.5px" width="15" height="15"><path d="M2.5,1 V12.5 H14 M3.5,11.5 L11,4" fill="none" stroke="#d8d8d8" stroke-width="1.1"/><polygon points="1,3 2.5,0 4,3" fill="#d8d8d8"/><polygon points="12.5,11 15.3,12.5 12.5,14" fill="#d8d8d8"/><polygon points="12.2,2.6 11.6,5.8 9,3.2" fill="#d8d8d8"/><rect x="1.4" y="11.4" width="2.2" height="2.2" fill="#f0f0f0"/></svg>
<div class="a" style="left:101.5px;top:563px;width:53.5px;height:23.5px;background:#3b4453;"></div>
<svg style="left:105.3px;top:567px" width="15" height="15"><path d="M0.8,14 C3.5,10 5.3,5.5 5.7,1.5 C6.2,0.3 8.8,0.3 9.3,1.5 C9.7,5.5 11.5,10 14.2,14 Z" fill="none" stroke="#d8d8d8" stroke-width="1.1"/><path d="M7.5,4.5 V12" stroke="#d8d8d8" stroke-width="1.1"/><polygon points="6,6 7.5,3.4 9,6" fill="#d8d8d8"/><polygon points="6,10.6 7.5,13.2 9,10.6" fill="#d8d8d8"/></svg>
<div class="t" style="left:125px;top:566.5px;font-size:14px;letter-spacing:-1.643px;color:#f0f0f0">1x</div>
<svg style="left:143.0px;top:572.75px" width="8" height="4.5"><polygon points="0,0 8,0 4.0,4.5" fill="#d8d8d8"/></svg>
<div class="a" style="left:158.3px;top:563px;width:63.39999999999998px;height:23.5px;background:#3b4453;"></div>
<svg style="left:162px;top:566.5px" width="17" height="17"><circle cx="8.4" cy="8.4" r="7.6" fill="none" stroke="#d8d8d8" stroke-width="1.3"/><path d="M3.2,3.5 C5,2.5 6.5,3 7.5,4.5 C8,6 6.5,6.5 6,7.8 C5.2,9 6.8,9.8 6.8,11.5 C6.5,13 5.5,14 4.8,14.8 C2,13 0.8,10 1,7.5 C1.2,6 2,4.5 3.2,3.5 Z M10,1.2 C12,1.8 14,3 15,5 C13.5,5.5 12,5.2 11.2,4 C10.6,3 10.3,2.2 10,1.2 Z M11,8.5 C12.5,7.8 14.5,8.5 15.8,9.5 C15.5,11.5 14,13.8 12.2,14.8 C11,13.5 10.2,10.5 11,8.5 Z" fill="#d8d8d8"/></svg>
<div class="t" style="left:182.3px;top:566.5px;font-size:14px;letter-spacing:-1.000px;color:#f0f0f0">CA-I</div>
<svg style="left:210.3px;top:572.75px" width="8" height="4.5"><polygon points="0,0 8,0 4.0,4.5" fill="#d8d8d8"/></svg>
<div class="a" style="left:225px;top:563px;width:94.5px;height:23.5px;background:#3b4453;"></div>
<svg style="left:230px;top:567px" width="13.5" height="15.5"><path d="M0.6,0.6 H8.5 L12.8,4.8 V14.8 H0.6 Z" fill="none" stroke="#d8d8d8" stroke-width="1.1"/><path d="M8.5,0.6 V4.8 H12.8" fill="none" stroke="#d8d8d8" stroke-width="1"/><path d="M3.5,4 V14.8 M7,6.5 V14.8 M0.6,7.5 H10 M0.6,11 H10 M10,6.5 V14.8" stroke="#d8d8d8" stroke-width="0.9" fill="none"/></svg>
<div class="t" style="left:249px;top:566.5px;font-size:14px;letter-spacing:-1.267px;color:#f0f0f0">1 : 134205</div>
<svg style="left:307.0px;top:572.75px" width="8" height="4.5"><polygon points="0,0 8,0 4.0,4.5" fill="#d8d8d8"/></svg>
<div class="a" style="left:320.5px;top:563px;width:21.5px;height:23.5px;background:#5b8ac6;"></div>
<svg style="left:325px;top:567px" width="11" height="14"><path d="M2.3,6.5 V4.2 A3.2,3.2 0 0 1 8.7,4.2 V6.5" fill="none" stroke="#ffffff" stroke-width="1.7"/><rect x="0" y="6.2" width="11" height="7.8" rx="0.8" fill="#ffffff"/></svg>
<div class="a" style="left:346.5px;top:563px;width:61.0px;height:23.5px;background:#3b4453;"></div>
<div class="t" style="left:349px;top:566.5px;font-size:14px;color:#f0f0f0;transform-origin:0 50%;transform:scaleX(0.791);letter-spacing:-0.6px">OBJET</div>
<div class="a" style="left:411.7px;top:563px;width:72.30000000000001px;height:23.5px;background:#3b4453;"></div>
<svg style="left:415px;top:567px" width="18.5" height="15"><path d="M5,0 V15 M9.5,0 V15 M14,0 V15 M0,3.3 H18.5 M0,7.5 H18.5 M0,11.7 H18.5" stroke="#e0e0e0" stroke-width="1.1"/></svg>
<svg style="left:445.5px;top:568.5px" width="15" height="13"><rect x="0" y="0.0" width="2" height="2" fill="#e0e0e0"/><rect x="0" y="5.2" width="2" height="2" fill="#e0e0e0"/><rect x="0" y="10.4" width="2" height="2" fill="#e0e0e0"/><rect x="6" y="0.0" width="2" height="2" fill="#e0e0e0"/><rect x="6" y="5.2" width="2" height="2" fill="#e0e0e0"/><rect x="6" y="10.4" width="2" height="2" fill="#e0e0e0"/><rect x="12" y="0.0" width="2" height="2" fill="#e0e0e0"/><rect x="12" y="5.2" width="2" height="2" fill="#e0e0e0"/><rect x="12" y="10.4" width="2" height="2" fill="#e0e0e0"/></svg>
<svg style="left:471.5px;top:572.75px" width="8" height="4.5"><polygon points="0,0 8,0 4.0,4.5" fill="#d8d8d8"/></svg>
<div class="a" style="left:488px;top:563px;width:195px;height:23.5px;background:#3b4453;"></div>
<svg style="left:492px;top:567px" width="19" height="15"><path d="M1.5,0 V14 H18.5 M1.5,8.5 H7 V14" fill="none" stroke="#d8d8d8" stroke-width="1.2"/></svg>
<div class="a" style="left:517px;top:563px;width:26.5px;height:23.5px;background:#5b8ac6;"></div>
<svg style="left:520px;top:566px" width="21" height="17"><ellipse cx="8.8" cy="10" rx="7.6" ry="6" fill="none" stroke="#ffffff" stroke-width="1.2"/><path d="M8.8,10 L18.5,2.2 M8.8,10.5 H20" stroke="#ffffff" stroke-width="1.1" fill="none"/></svg>
<svg style="left:549.0px;top:572.75px" width="8" height="4.5"><polygon points="0,0 8,0 4.0,4.5" fill="#d8d8d8"/></svg>
<svg style="left:567.5px;top:566px" width="17" height="17"><path d="M8.2,0 V17" stroke="#4fc46a" stroke-width="1.2"/><path d="M1,1.5 L15.5,15.5" stroke="#e0483e" stroke-width="1.2"/><circle cx="8.2" cy="8.6" r="1.5" fill="#ffffff"/></svg>
<svg style="left:594.7px;top:572.75px" width="8" height="4.5"><polygon points="0,0 8,0 4.0,4.5" fill="#d8d8d8"/></svg>
<div class="a" style="left:609.7px;top:563px;width:25.299999999999955px;height:23.5px;background:#5b8ac6;"></div>
<svg style="left:612px;top:567px" width="21" height="15"><path d="M2,13.5 H20 M3,13.5 L17,1.5" stroke="#ffffff" stroke-width="1.3" fill="none"/><path d="M8.5,8.5 L12.5,13.5 H3 Z" fill="#ffffff"/></svg>
<div class="a" style="left:638px;top:563px;width:25.5px;height:23.5px;background:#5b8ac6;"></div>
<svg style="left:641.5px;top:566.5px" width="19" height="16"><rect x="3" y="4" width="15" height="11.5" fill="none" stroke="#ffffff" stroke-width="1.3"/><rect x="0.6" y="0.6" width="4.5" height="4.5" fill="#5b8ac6" stroke="#ffffff" stroke-width="1.1"/></svg>
<svg style="left:669.5px;top:572.75px" width="8" height="4.5"><polygon points="0,0 8,0 4.0,4.5" fill="#d8d8d8"/></svg>
<div class="a" style="left:687.5px;top:563px;width:26.0px;height:23.5px;background:#5b8ac6;"></div>
<svg style="left:690.5px;top:566px" width="22" height="17"><path d="M8,1.5 L10.2,10.5 L15.5,15.5 L8,12.5 L0.5,15.5 L5.8,10.5 Z" fill="#ffffff"/><path d="M8,1.5 V12" stroke="#5b8ac6" stroke-width="0.8"/><circle cx="17.3" cy="4" r="2.3" fill="none" stroke="#ffffff" stroke-width="1.1"/></svg>
<div class="a" style="left:717px;top:563px;width:46.299999999999955px;height:23.5px;background:#3b4453;"></div>
<svg style="left:722px;top:566.5px" width="17" height="17"><g transform="translate(8.5,8.5)"><rect x="-1.9" y="-8.5" width="3.8" height="5" fill="#d8d8d8" transform="rotate(0)"/><rect x="-1.9" y="-8.5" width="3.8" height="5" fill="#d8d8d8" transform="rotate(45)"/><rect x="-1.9" y="-8.5" width="3.8" height="5" fill="#d8d8d8" transform="rotate(90)"/><rect x="-1.9" y="-8.5" width="3.8" height="5" fill="#d8d8d8" transform="rotate(135)"/><rect x="-1.9" y="-8.5" width="3.8" height="5" fill="#d8d8d8" transform="rotate(180)"/><rect x="-1.9" y="-8.5" width="3.8" height="5" fill="#d8d8d8" transform="rotate(225)"/><rect x="-1.9" y="-8.5" width="3.8" height="5" fill="#d8d8d8" transform="rotate(270)"/><rect x="-1.9" y="-8.5" width="3.8" height="5" fill="#d8d8d8" transform="rotate(315)"/><circle r="5.8" fill="#d8d8d8"/><circle r="2.4" fill="#3b4453"/></g></svg>
<svg style="left:749.5px;top:572.75px" width="8" height="4.5"><polygon points="0,0 8,0 4.0,4.5" fill="#d8d8d8"/></svg>
<div class="a" style="left:766.5px;top:563px;width:27.299999999999955px;height:23.5px;background:#3b4453;"></div>
<svg style="left:771px;top:566.5px" width="19" height="16"><rect x="0.6" y="0.6" width="6.8" height="6.8" fill="none" stroke="#d8d8d8" stroke-width="1.1"/><circle cx="14.3" cy="7" r="3.3" fill="none" stroke="#d8d8d8" stroke-width="1.1"/><path d="M8,7 H11" stroke="#d8d8d8" stroke-width="1"/><path d="M3.5,15.5 L7.5,9.5 L11.5,15.5 Z" fill="none" stroke="#d8d8d8" stroke-width="1.1"/></svg>
<div class="a" style="left:797px;top:563px;width:36px;height:23.5px;background:#3b4453;"></div>
<svg style="left:805px;top:566px" width="18" height="16"><path d="M9,0.5 L17.5,15.5 H0.5 Z" fill="#d8d8d8"/><path d="M9,5 V11" stroke="#3b4453" stroke-width="1.8"/><circle cx="9" cy="13.2" r="1.1" fill="#3b4453"/></svg>
<div class="a" style="left:836px;top:563px;width:58px;height:23.5px;background:#3b4453;"></div>
<svg style="left:840.5px;top:568.5px" width="18" height="13"><rect x="0.6" y="0.6" width="16.8" height="11.8" fill="none" stroke="#e0e0e0" stroke-width="1.1"/><path d="M3,10 L6.5,6.5 M11,6 L14.5,2.5" stroke="#e0e0e0" stroke-width="1.1"/><polygon points="2.5,10.5 2.8,7.2 5.8,10.2" fill="#e0e0e0"/><polygon points="15,2 14.7,5.3 11.7,2.3" fill="#e0e0e0"/></svg>
<svg style="left:868px;top:567.5px" width="18" height="15"><path d="M0,1 H18 M0,7.5 H18 M0,14 H18" stroke="#ffffff" stroke-width="1.8"/></svg>
</body></html>
